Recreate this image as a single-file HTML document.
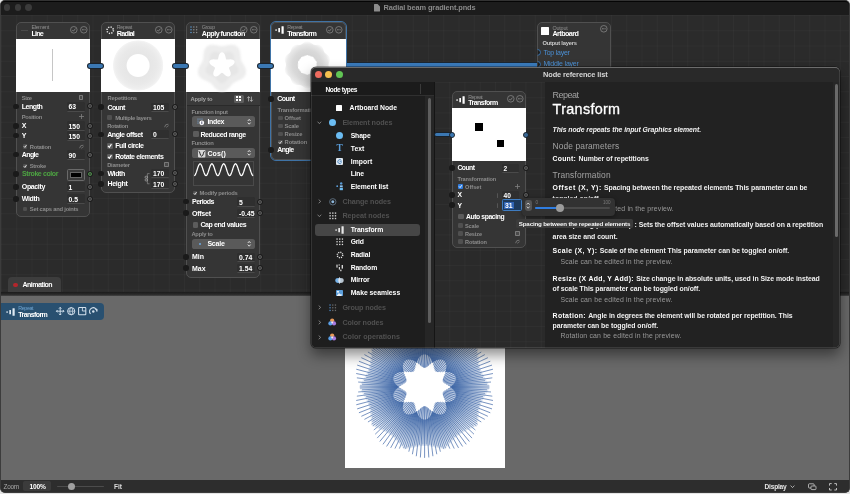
<!DOCTYPE html>
<html><head><meta charset="utf-8"><title>Radial beam gradient.pnds</title>
<style>
html,body{margin:0;padding:0;}
body{width:850px;height:494px;overflow:hidden;background:#000;position:relative;font-family:"Liberation Sans",sans-serif;}
.t{position:absolute;white-space:nowrap;}
.r{position:absolute;box-sizing:border-box;}
#root{position:absolute;left:0;top:0;width:850px;height:494px;overflow:hidden;will-change:transform;transform:translateZ(0);}
</style></head><body><div id="root">
<div class="r" style="left:0.00px;top:0.00px;width:850.00px;height:494.00px;background:#e4e4e4;"></div>
<div class="r" style="left:0.00px;top:0.00px;width:850.00px;height:492.80px;background:#2b2b2b;border-radius:5px;border:1px solid #3c3c3c;border-top:0.8px solid #333;"></div>
<div class="r" style="left:1.00px;top:0.80px;width:848.00px;height:13.90px;background:#1c1c1c;border-radius:4px 4px 0 0;border-top:1px solid #050505;"></div>
<div class="r" style="left:3.60px;top:4.00px;width:6.80px;height:6.80px;background:#3b3b3b;border-radius:50%;"></div>
<div class="r" style="left:14.50px;top:4.00px;width:6.80px;height:6.80px;background:#3b3b3b;border-radius:50%;"></div>
<div class="r" style="left:25.10px;top:4.00px;width:6.80px;height:6.80px;background:#3b3b3b;border-radius:50%;"></div>
<svg class="r" style="left:374.30px;top:3.60px;overflow:visible;" width="6" height="7.6" viewBox="0 0 6 7.6"><path d="M0.6 0h3l2.4 2.4v4.6a.6.6 0 0 1-.6.6h-4.8a.6.6 0 0 1-.6-.6v-6.4a.6.6 0 0 1 .6-.6z" fill="#8c8c8c"/></svg>
<div class="t" style="top:4px;font-size:7.4px;line-height:7.4px;color:#8a8a8a;left:383.60px;font-weight:700;letter-spacing:-0.102px;">Radial beam gradient.pnds</div>
<div class="r" style="left:1.00px;top:14.70px;width:848.00px;height:278.00px;background:#2b2b2b;background-image:linear-gradient(to right,rgba(255,255,255,.022) 0.6px,transparent 0.6px),linear-gradient(to bottom,rgba(255,255,255,.022) 0.6px,transparent 0.6px);background-size:15.25px 15.25px;"></div>
<div class="r" style="left:345.00px;top:63.00px;width:193.00px;height:4.00px;background:#3b7cbd;"></div>
<div class="r" style="left:345.00px;top:62.20px;width:193.00px;height:0.80px;background:#1b2733;"></div>
<div class="r" style="left:16.00px;top:22.00px;width:74.40px;height:194.50px;background:#353535;border-radius:5px;border:0.8px solid #505050;"></div>
<div class="r" style="left:16.00px;top:39.20px;width:74.40px;height:53.30px;background:#fff;"></div>
<div class="r" style="left:51.80px;top:48.60px;width:1.00px;height:32.60px;background:#c6c6c6;"></div>
<div class="t" style="top:25px;font-size:5.4px;line-height:5.4px;color:#8f8f8f;left:31.60px;letter-spacing:-0.364px;">Element</div>
<div class="t" style="top:30px;font-size:7.2px;line-height:7.2px;color:#fff;left:31.60px;font-weight:700;letter-spacing:-0.861px;">Line</div>
<div class="r" style="left:21.00px;top:30.30px;width:7.00px;height:0.80px;background:#4a4a4a;"></div>
<svg class="r" style="left:70.10px;top:25.50px;overflow:visible;" width="7.6" height="7.6" viewBox="0 0 7.6 7.6"><circle cx="3.8" cy="3.8" r="3.3" fill="none" stroke="#8e8e8e" stroke-width=".7"/><path d="M2.2 3.9l1.2 1.3 2.1-2.6" fill="none" stroke="#9a9a9a" stroke-width=".7"/></svg>
<svg class="r" style="left:79.50px;top:25.50px;overflow:visible;" width="7.6" height="7.6" viewBox="0 0 7.6 7.6"><circle cx="3.8" cy="3.8" r="3.3" fill="none" stroke="#8e8e8e" stroke-width=".7"/><path d="M2 3.8h3.6" fill="none" stroke="#9a9a9a" stroke-width=".9" stroke-dasharray="0.9 0.45"/></svg>
<div class="t" style="top:96px;font-size:5.8px;line-height:5.8px;color:#8c8c8c;left:21.80px;font-weight:700;letter-spacing:-0.468px;">Size</div>
<div class="r" style="left:78.80px;top:95.30px;width:4.40px;height:4.40px;background:#4a4a4a;border:0.6px solid #7a7a7a;border-radius:.8px;"></div>
<div class="t" style="top:103px;font-size:7.0px;line-height:7.0px;color:#fff;left:21.80px;font-weight:700;letter-spacing:-0.467px;">Length</div>
<div class="r" style="left:67.00px;top:102.00px;width:17.60px;height:9.60px;background:#2f2f2f;border-radius:1.5px;border-bottom:0.6px solid #4a4a4a;"></div>
<div class="t" style="top:104px;font-size:6.8px;line-height:6.8px;color:#fff;left:68.60px;font-weight:700;">63</div>
<div class="t" style="top:115px;font-size:5.8px;line-height:5.8px;color:#8c8c8c;left:21.80px;font-weight:700;letter-spacing:-0.355px;">Position</div>
<svg class="r" style="left:78.70px;top:114.10px;overflow:visible;" width="5" height="5" viewBox="0 0 5 5"><path d="M2.5 0v5M0 2.5h5" stroke="#808080" stroke-width=".8"/></svg>
<div class="t" style="top:122px;font-size:7.0px;line-height:7.0px;color:#fff;left:21.80px;font-weight:700;">X</div>
<div class="r" style="left:67.00px;top:121.20px;width:17.60px;height:9.40px;background:#2f2f2f;border-radius:1.5px;border-bottom:0.6px solid #4a4a4a;"></div>
<div class="t" style="top:124px;font-size:6.8px;line-height:6.8px;color:#fff;left:68.60px;font-weight:700;">150</div>
<div class="t" style="top:132px;font-size:7.0px;line-height:7.0px;color:#fff;left:21.80px;font-weight:700;">Y</div>
<div class="r" style="left:67.00px;top:131.20px;width:17.60px;height:9.40px;background:#2f2f2f;border-radius:1.5px;border-bottom:0.6px solid #4a4a4a;"></div>
<div class="t" style="top:134px;font-size:6.8px;line-height:6.8px;color:#fff;left:68.60px;font-weight:700;">150</div>
<div class="r" style="left:22.70px;top:144.45px;width:4.30px;height:4.30px;background:#505050;border-radius:1.2px;"></div>
<svg class="r" style="left:22.70px;top:144.45px;overflow:visible;" width="4.3" height="4.3" viewBox="0 0 4.6 4.6"><path d="M.9 2.4l1.1 1.3 1.8-2.7" fill="none" stroke="#e4e4e4" stroke-width=".95"/></svg>
<div class="t" style="top:145px;font-size:5.8px;line-height:5.8px;color:#8c8c8c;left:29.80px;font-weight:700;letter-spacing:-0.302px;">Rotation</div>
<svg class="r" style="left:78.70px;top:143.50px;overflow:visible;" width="5" height="5" viewBox="0 0 5 5"><path d="M.6 4.2A3.4 3.4 0 0 1 4.4 1.2" fill="none" stroke="#808080" stroke-width=".8"/><path d="M2.2 4.4L4.6 2.6" stroke="#808080" stroke-width=".7"/></svg>
<div class="t" style="top:151px;font-size:7.0px;line-height:7.0px;color:#fff;left:21.80px;font-weight:700;letter-spacing:-0.612px;">Angle</div>
<div class="r" style="left:67.00px;top:150.20px;width:17.60px;height:9.60px;background:#2f2f2f;border-radius:1.5px;border-bottom:0.6px solid #4a4a4a;"></div>
<div class="t" style="top:153px;font-size:6.8px;line-height:6.8px;color:#fff;left:68.60px;font-weight:700;">90</div>
<div class="r" style="left:22.70px;top:163.85px;width:4.30px;height:4.30px;background:#505050;border-radius:1.2px;"></div>
<svg class="r" style="left:22.70px;top:163.85px;overflow:visible;" width="4.3" height="4.3" viewBox="0 0 4.6 4.6"><path d="M.9 2.4l1.1 1.3 1.8-2.7" fill="none" stroke="#e4e4e4" stroke-width=".95"/></svg>
<div class="t" style="top:164px;font-size:5.8px;line-height:5.8px;color:#8c8c8c;left:29.80px;font-weight:700;letter-spacing:-0.330px;">Stroke</div>
<div class="t" style="top:170px;font-size:7.0px;line-height:7.0px;color:#4da342;left:22.00px;font-weight:700;letter-spacing:-0.406px;">Stroke color</div>
<div class="r" style="left:66.80px;top:169.20px;width:17.80px;height:11.60px;background:#3a3a3a;border:0.7px solid #6a6a6a;border-radius:1.5px;"></div>
<div class="r" style="left:69.80px;top:172.20px;width:12.00px;height:5.80px;background:#000;border:0.5px solid #666;"></div>
<div class="t" style="top:183px;font-size:7.0px;line-height:7.0px;color:#fff;left:21.80px;font-weight:700;letter-spacing:-0.364px;">Opacity</div>
<div class="r" style="left:67.00px;top:182.40px;width:17.60px;height:9.60px;background:#2f2f2f;border-radius:1.5px;border-bottom:0.6px solid #4a4a4a;"></div>
<div class="t" style="top:185px;font-size:6.8px;line-height:6.8px;color:#fff;left:68.60px;font-weight:700;">1</div>
<div class="t" style="top:195px;font-size:7.0px;line-height:7.0px;color:#fff;left:21.80px;font-weight:700;letter-spacing:-0.344px;">Width</div>
<div class="r" style="left:67.00px;top:194.20px;width:17.60px;height:9.60px;background:#2f2f2f;border-radius:1.5px;border-bottom:0.6px solid #4a4a4a;"></div>
<div class="t" style="top:197px;font-size:6.8px;line-height:6.8px;color:#fff;left:68.60px;font-weight:700;">0.5</div>
<div class="r" style="left:22.70px;top:206.80px;width:4.40px;height:4.40px;background:#505050;border-radius:1.2px;"></div>
<div class="t" style="top:207px;font-size:5.8px;line-height:5.8px;color:#8c8c8c;left:29.80px;font-weight:700;letter-spacing:-0.225px;">Set caps and joints</div>
<div class="r" style="left:13.40px;top:103.60px;width:5.60px;height:5.60px;background:#1a1a1a;border-radius:50%;"></div>
<div class="r" style="left:13.40px;top:123.00px;width:5.60px;height:5.60px;background:#1a1a1a;border-radius:50%;"></div>
<div class="r" style="left:13.40px;top:132.80px;width:5.60px;height:5.60px;background:#1a1a1a;border-radius:50%;"></div>
<div class="r" style="left:13.40px;top:151.80px;width:5.60px;height:5.60px;background:#1a1a1a;border-radius:50%;"></div>
<div class="r" style="left:13.40px;top:171.20px;width:5.60px;height:5.60px;background:#1a1a1a;border-radius:50%;"></div>
<div class="r" style="left:13.40px;top:184.20px;width:5.60px;height:5.60px;background:#1a1a1a;border-radius:50%;"></div>
<div class="r" style="left:13.40px;top:196.00px;width:5.60px;height:5.60px;background:#1a1a1a;border-radius:50%;"></div>
<div class="r" style="left:87.30px;top:103.40px;width:6.00px;height:6.00px;background:#3e3e3e;border-radius:50%;border:0.9px solid #181818;box-shadow:inset 0 0 0 .9px #646464;"></div>
<div class="r" style="left:87.30px;top:122.80px;width:6.00px;height:6.00px;background:#3e3e3e;border-radius:50%;border:0.9px solid #181818;box-shadow:inset 0 0 0 .9px #646464;"></div>
<div class="r" style="left:87.30px;top:132.60px;width:6.00px;height:6.00px;background:#3e3e3e;border-radius:50%;border:0.9px solid #181818;box-shadow:inset 0 0 0 .9px #646464;"></div>
<div class="r" style="left:87.30px;top:151.60px;width:6.00px;height:6.00px;background:#3e3e3e;border-radius:50%;border:0.9px solid #181818;box-shadow:inset 0 0 0 .9px #646464;"></div>
<div class="r" style="left:87.30px;top:184.00px;width:6.00px;height:6.00px;background:#3e3e3e;border-radius:50%;border:0.9px solid #181818;box-shadow:inset 0 0 0 .9px #646464;"></div>
<div class="r" style="left:87.30px;top:195.80px;width:6.00px;height:6.00px;background:#3e3e3e;border-radius:50%;border:0.9px solid #181818;box-shadow:inset 0 0 0 .9px #646464;"></div>
<div class="r" style="left:87.30px;top:171.00px;width:6.00px;height:6.00px;background:#3e3e3e;border-radius:50%;border:0.9px solid #181818;box-shadow:inset 0 0 0 .9px #4fa54a;"></div>
<div class="r" style="left:101.00px;top:22.00px;width:74.40px;height:171.00px;background:#353535;border-radius:5px;border:0.8px solid #505050;"></div>
<div class="r" style="left:101.00px;top:39.20px;width:74.40px;height:53.30px;background:#fff;"></div>
<svg class="r" style="left:101.00px;top:39.20px;overflow:visible;" width="74.4" height="53.3" viewBox="0 0 74.4 53.3"><defs><radialGradient id="rg2" gradientUnits="userSpaceOnUse" cx="37.1" cy="26.5" r="25.5"><stop offset=".43" stop-color="#fff"/><stop offset=".47" stop-color="#e6e6e6"/><stop offset=".72" stop-color="#e9e9e9"/><stop offset=".9" stop-color="#eeeeee"/><stop offset=".965" stop-color="#f3f3f3"/><stop offset="1" stop-color="#fff"/></radialGradient></defs><circle cx="37.1" cy="26.5" r="25.5" fill="url(#rg2)"/></svg>
<svg class="r" style="left:105.60px;top:26.40px;overflow:visible;" width="8.4" height="8.4" viewBox="0 0 8.4 8.4"><circle cx="4.2" cy="4.2" r="3.2" fill="none" stroke="#e8e8e8" stroke-width="1.5" stroke-dasharray="1.25 1.26"/></svg>
<div class="t" style="top:25px;font-size:5.4px;line-height:5.4px;color:#8f8f8f;left:116.80px;letter-spacing:-0.399px;">Repeat</div>
<div class="t" style="top:30px;font-size:7.2px;line-height:7.2px;color:#fff;left:116.80px;font-weight:700;letter-spacing:-0.716px;">Radial</div>
<svg class="r" style="left:155.20px;top:25.50px;overflow:visible;" width="7.6" height="7.6" viewBox="0 0 7.6 7.6"><circle cx="3.8" cy="3.8" r="3.3" fill="none" stroke="#8e8e8e" stroke-width=".7"/><path d="M2.2 3.9l1.2 1.3 2.1-2.6" fill="none" stroke="#9a9a9a" stroke-width=".7"/></svg>
<svg class="r" style="left:164.60px;top:25.50px;overflow:visible;" width="7.6" height="7.6" viewBox="0 0 7.6 7.6"><circle cx="3.8" cy="3.8" r="3.3" fill="none" stroke="#8e8e8e" stroke-width=".7"/><path d="M2 3.8h3.6" fill="none" stroke="#9a9a9a" stroke-width=".9" stroke-dasharray="0.9 0.45"/></svg>
<div class="t" style="top:96px;font-size:5.8px;line-height:5.8px;color:#8c8c8c;left:107.60px;font-weight:700;letter-spacing:-0.207px;">Repetitions</div>
<div class="t" style="top:104px;font-size:7.0px;line-height:7.0px;color:#fff;left:107.40px;font-weight:700;letter-spacing:-0.556px;">Count</div>
<div class="r" style="left:151.40px;top:102.60px;width:17.60px;height:9.60px;background:#2f2f2f;border-radius:1.5px;border-bottom:0.6px solid #4a4a4a;"></div>
<div class="t" style="top:105px;font-size:6.8px;line-height:6.8px;color:#fff;left:153.00px;font-weight:700;">105</div>
<div class="r" style="left:107.20px;top:115.40px;width:5.00px;height:5.00px;background:#505050;border-radius:1.2px;"></div>
<div class="t" style="top:115px;font-size:6.0px;line-height:6.0px;color:#8c8c8c;left:115.20px;font-weight:700;letter-spacing:-0.364px;">Multiple layers</div>
<div class="t" style="top:124px;font-size:5.8px;line-height:5.8px;color:#8c8c8c;left:107.20px;font-weight:700;letter-spacing:-0.359px;">Rotation</div>
<svg class="r" style="left:164.10px;top:122.70px;overflow:visible;" width="5" height="5" viewBox="0 0 5 5"><path d="M.6 4.2A3.4 3.4 0 0 1 4.4 1.2" fill="none" stroke="#808080" stroke-width=".8"/><path d="M2.2 4.4L4.6 2.6" stroke="#808080" stroke-width=".7"/></svg>
<div class="t" style="top:131px;font-size:7.0px;line-height:7.0px;color:#fff;left:107.20px;font-weight:700;letter-spacing:-0.405px;">Angle offset</div>
<div class="r" style="left:151.40px;top:129.80px;width:17.60px;height:9.60px;background:#2f2f2f;border-radius:1.5px;border-bottom:0.6px solid #4a4a4a;"></div>
<div class="t" style="top:132px;font-size:6.8px;line-height:6.8px;color:#fff;left:153.00px;font-weight:700;">0</div>
<div class="r" style="left:107.30px;top:143.30px;width:5.40px;height:5.40px;background:#5c5c5c;border-radius:1.2px;"></div>
<svg class="r" style="left:107.30px;top:143.30px;overflow:visible;" width="5.4" height="5.4" viewBox="0 0 4.6 4.6"><path d="M.9 2.4l1.1 1.3 1.8-2.7" fill="none" stroke="#fff" stroke-width=".95"/></svg>
<div class="t" style="top:142px;font-size:7.0px;line-height:7.0px;color:#fff;left:115.20px;font-weight:700;letter-spacing:-0.389px;">Full circle</div>
<div class="r" style="left:107.30px;top:153.50px;width:5.40px;height:5.40px;background:#5c5c5c;border-radius:1.2px;"></div>
<svg class="r" style="left:107.30px;top:153.50px;overflow:visible;" width="5.4" height="5.4" viewBox="0 0 4.6 4.6"><path d="M.9 2.4l1.1 1.3 1.8-2.7" fill="none" stroke="#fff" stroke-width=".95"/></svg>
<div class="t" style="top:153px;font-size:7.0px;line-height:7.0px;color:#fff;left:115.20px;font-weight:700;letter-spacing:-0.391px;">Rotate elements</div>
<div class="t" style="top:163px;font-size:5.8px;line-height:5.8px;color:#8c8c8c;left:107.20px;font-weight:700;letter-spacing:-0.288px;">Diameter</div>
<div class="r" style="left:164.40px;top:162.20px;width:4.40px;height:4.40px;background:#4a4a4a;border:0.6px solid #7a7a7a;border-radius:.8px;"></div>
<div class="t" style="top:170px;font-size:7.0px;line-height:7.0px;color:#fff;left:107.40px;font-weight:700;letter-spacing:-0.344px;">Width</div>
<div class="r" style="left:151.40px;top:169.00px;width:17.60px;height:9.40px;background:#2f2f2f;border-radius:1.5px;border-bottom:0.6px solid #4a4a4a;"></div>
<div class="t" style="top:171px;font-size:6.8px;line-height:6.8px;color:#fff;left:153.00px;font-weight:700;">170</div>
<div class="t" style="top:180px;font-size:7.0px;line-height:7.0px;color:#fff;left:107.40px;font-weight:700;letter-spacing:-0.256px;">Height</div>
<div class="r" style="left:151.40px;top:179.20px;width:17.60px;height:9.40px;background:#2f2f2f;border-radius:1.5px;border-bottom:0.6px solid #4a4a4a;"></div>
<div class="t" style="top:182px;font-size:6.8px;line-height:6.8px;color:#fff;left:153.00px;font-weight:700;">170</div>
<svg class="r" style="left:143.60px;top:172.00px;overflow:visible;" width="6.4" height="13.4" viewBox="0 0 6.4 13.4"><path d="M5.6 1.6H3.4v10.2h2.2" fill="none" stroke="#8a8a8a" stroke-width=".7"/><rect x="1" y="4.2" width="2.6" height="2" rx="1" fill="none" stroke="#bbb" stroke-width=".6"/><rect x="1" y="7" width="2.6" height="2" rx="1" fill="none" stroke="#bbb" stroke-width=".6"/></svg>
<div class="r" style="left:98.40px;top:104.40px;width:5.60px;height:5.60px;background:#1a1a1a;border-radius:50%;"></div>
<div class="r" style="left:172.30px;top:104.20px;width:6.00px;height:6.00px;background:#3e3e3e;border-radius:50%;border:0.9px solid #181818;box-shadow:inset 0 0 0 .9px #646464;"></div>
<div class="r" style="left:98.40px;top:131.60px;width:5.60px;height:5.60px;background:#1a1a1a;border-radius:50%;"></div>
<div class="r" style="left:172.30px;top:131.40px;width:6.00px;height:6.00px;background:#3e3e3e;border-radius:50%;border:0.9px solid #181818;box-shadow:inset 0 0 0 .9px #646464;"></div>
<div class="r" style="left:98.40px;top:170.60px;width:5.60px;height:5.60px;background:#1a1a1a;border-radius:50%;"></div>
<div class="r" style="left:172.30px;top:170.40px;width:6.00px;height:6.00px;background:#3e3e3e;border-radius:50%;border:0.9px solid #181818;box-shadow:inset 0 0 0 .9px #646464;"></div>
<div class="r" style="left:98.40px;top:181.00px;width:5.60px;height:5.60px;background:#1a1a1a;border-radius:50%;"></div>
<div class="r" style="left:172.30px;top:180.80px;width:6.00px;height:6.00px;background:#3e3e3e;border-radius:50%;border:0.9px solid #181818;box-shadow:inset 0 0 0 .9px #646464;"></div>
<div class="r" style="left:186.00px;top:22.00px;width:74.40px;height:256.40px;background:#353535;border-radius:5px;border:0.8px solid #505050;"></div>
<div class="r" style="left:186.00px;top:39.20px;width:74.40px;height:53.30px;background:#fff;"></div>
<svg class="r" style="left:186.00px;top:39.20px;overflow:visible;" width="74.4" height="53.3" viewBox="0 0 74.4 53.3"><g style="filter:blur(.9px)"><polygon points="36.00,7.20 37.60,7.08 39.27,6.75 41.06,6.32 42.98,5.91 45.00,5.67 47.03,5.75 48.97,6.24 50.69,7.17 52.12,8.53 53.18,10.22 53.88,12.13 54.28,14.12 54.49,16.07 54.62,17.91 54.83,19.60 55.21,21.16 55.82,22.64 56.65,24.13 57.61,25.70 58.60,27.40 59.45,29.25 60.00,31.20 60.13,33.19 59.78,35.13 58.93,36.90 57.65,38.43 56.05,39.69 54.28,40.68 52.49,41.48 50.78,42.18 49.24,42.90 47.87,43.74 46.65,44.78 45.49,46.02 44.30,47.43 42.98,48.89 41.49,50.27 39.80,51.40 37.95,52.14 36.00,52.40 34.05,52.14 32.20,51.40 30.51,50.27 29.02,48.89 27.70,47.43 26.51,46.02 25.35,44.78 24.13,43.74 22.76,42.90 21.22,42.18 19.51,41.48 17.72,40.68 15.95,39.69 14.35,38.43 13.07,36.90 12.22,35.13 11.87,33.19 12.00,31.20 12.55,29.25 13.40,27.40 14.39,25.70 15.35,24.13 16.18,22.64 16.79,21.16 17.17,19.60 17.38,17.91 17.51,16.07 17.72,14.12 18.12,12.13 18.82,10.22 19.88,8.53 21.31,7.17 23.03,6.24 24.97,5.75 27.00,5.67 29.02,5.91 30.94,6.32 32.73,6.75 34.40,7.08" fill="#ededed"/><polygon points="36.00,14.40 37.03,14.29 38.13,13.98 39.32,13.56 40.64,13.13 42.03,12.83 43.45,12.77 44.80,13.03 45.99,13.65 46.94,14.59 47.61,15.79 47.99,17.16 48.14,18.58 48.14,19.96 48.11,21.23 48.15,22.37 48.36,23.38 48.79,24.33 49.42,25.27 50.19,26.28 51.00,27.40 51.72,28.64 52.21,29.97 52.38,31.33 52.17,32.65 51.57,33.85 50.63,34.85 49.44,35.64 48.14,36.22 46.82,36.64 45.61,37.01 44.54,37.40 43.64,37.92 42.87,38.61 42.17,39.51 41.45,40.55 40.64,41.67 39.68,42.73 38.57,43.61 37.32,44.20 36.00,44.40 34.68,44.20 33.43,43.61 32.32,42.73 31.36,41.67 30.55,40.55 29.83,39.51 29.13,38.61 28.36,37.92 27.46,37.40 26.39,37.01 25.18,36.64 23.86,36.22 22.56,35.64 21.37,34.85 20.43,33.85 19.83,32.65 19.62,31.33 19.79,29.97 20.28,28.64 21.00,27.40 21.81,26.28 22.58,25.27 23.21,24.33 23.64,23.38 23.85,22.37 23.89,21.23 23.86,19.96 23.86,18.58 24.01,17.16 24.39,15.79 25.06,14.59 26.01,13.65 27.20,13.03 28.55,12.77 29.97,12.83 31.36,13.13 32.68,13.56 33.87,13.98 34.97,14.29" fill="#e6e6e6"/></g><polygon points="36.00,13.20 37.02,13.46 37.93,14.20 38.66,15.31 39.18,16.60 39.52,17.91 39.75,19.05 39.98,19.90 40.35,20.41 40.95,20.61 41.83,20.57 42.99,20.43 44.33,20.35 45.73,20.44 47.00,20.79 47.99,21.43 48.55,22.32 48.62,23.37 48.20,24.47 47.37,25.50 46.30,26.40 45.16,27.12 44.15,27.69 43.41,28.18 43.04,28.69 43.04,29.32 43.35,30.15 43.84,31.20 44.33,32.45 44.68,33.81 44.73,35.13 44.43,36.27 43.76,37.08 42.78,37.47 41.61,37.40 40.37,36.94 39.18,36.20 38.15,35.34 37.29,34.55 36.60,34.00 36.00,33.80 35.40,34.00 34.71,34.55 33.85,35.34 32.82,36.20 31.63,36.94 30.39,37.40 29.22,37.47 28.24,37.08 27.57,36.27 27.27,35.13 27.32,33.81 27.67,32.45 28.16,31.20 28.65,30.15 28.96,29.32 28.96,28.69 28.59,28.18 27.85,27.69 26.84,27.12 25.70,26.40 24.63,25.50 23.80,24.47 23.38,23.37 23.45,22.32 24.01,21.43 25.00,20.79 26.27,20.44 27.67,20.35 29.01,20.43 30.17,20.57 31.05,20.61 31.65,20.41 32.02,19.90 32.25,19.05 32.48,17.91 32.82,16.60 33.34,15.31 34.07,14.20 34.98,13.46" fill="#fff" style="filter:blur(.35px)"/></svg>
<svg class="r" style="left:190.40px;top:26.40px;overflow:visible;" width="8" height="8" viewBox="0 0 8 8"><circle cx="1" cy="1" r=".75" fill="#5b9bd6"/><circle cx="1" cy="3.8" r=".75" fill="#5b9bd6"/><circle cx="1" cy="6.6" r=".75" fill="#5b9bd6"/><circle cx="3.8" cy="1" r=".75" fill="#8a8a8a"/><circle cx="3.8" cy="3.8" r=".75" fill="#8a8a8a"/><circle cx="3.8" cy="6.6" r=".75" fill="#8a8a8a"/><circle cx="6.6" cy="1" r=".75" fill="#8a8a8a"/><circle cx="6.6" cy="3.8" r=".75" fill="#8a8a8a"/><circle cx="6.6" cy="6.6" r=".75" fill="#8a8a8a"/></svg>
<div class="t" style="top:25px;font-size:5.4px;line-height:5.4px;color:#8f8f8f;left:201.80px;letter-spacing:-0.399px;">Group</div>
<div class="t" style="top:30px;font-size:7.2px;line-height:7.2px;color:#fff;left:201.80px;font-weight:700;letter-spacing:-0.525px;">Apply function</div>
<svg class="r" style="left:240.40px;top:25.50px;overflow:visible;" width="7.6" height="7.6" viewBox="0 0 7.6 7.6"><circle cx="3.8" cy="3.8" r="3.3" fill="none" stroke="#8e8e8e" stroke-width=".7"/><path d="M2.2 3.9l1.2 1.3 2.1-2.6" fill="none" stroke="#9a9a9a" stroke-width=".7"/></svg>
<svg class="r" style="left:249.80px;top:25.50px;overflow:visible;" width="7.6" height="7.6" viewBox="0 0 7.6 7.6"><circle cx="3.8" cy="3.8" r="3.3" fill="none" stroke="#8e8e8e" stroke-width=".7"/><path d="M2 3.8h3.6" fill="none" stroke="#9a9a9a" stroke-width=".9" stroke-dasharray="0.9 0.45"/></svg>
<div class="r" style="left:186.80px;top:92.50px;width:72.80px;height:13.00px;background:#3a3a3a;border-bottom:0.7px solid #2a2a2a;"></div>
<div class="t" style="top:97px;font-size:5.8px;line-height:5.8px;color:#a5a5a5;left:190.60px;font-weight:700;letter-spacing:-0.170px;">Apply to</div>
<div class="r" style="left:233.60px;top:94.60px;width:10.60px;height:8.40px;background:#5e5e5e;border-radius:1.6px;"></div>
<svg class="r" style="left:236.40px;top:96.30px;overflow:visible;" width="5" height="5" viewBox="0 0 5 5"><rect x="0" y="0" width="2" height="2" fill="#fff"/><rect x="3" y="0" width="2" height="2" fill="#fff"/><rect x="0" y="3" width="2" height="2" fill="#fff"/><rect x="3" y="3" width="2" height="2" fill="#fff"/></svg>
<svg class="r" style="left:247.40px;top:96.00px;overflow:visible;" width="6" height="6" viewBox="0 0 6 6"><path d="M1.6 5.4V.8M.2 2.2L1.6.6 3 2.2M4.4.6v4.6M3 3.8l1.4 1.6 1.4-1.6" fill="none" stroke="#d0d0d0" stroke-width=".7"/></svg>
<div class="t" style="top:110px;font-size:5.8px;line-height:5.8px;color:#8c8c8c;left:191.40px;font-weight:700;letter-spacing:-0.289px;">Function input</div>
<div class="r" style="left:192.40px;top:116.20px;width:62.40px;height:10.40px;background:#5a5a5a;border-radius:2.6px;"></div>
<div class="t" style="top:118px;font-size:7.0px;line-height:7.0px;color:#fff;left:207.40px;font-weight:700;letter-spacing:-0.324px;">Index</div>
<svg class="r" style="left:247.40px;top:117.60px;overflow:visible;" width="4.4" height="7.6" viewBox="0 0 4.4 7.6"><path d="M.8 3L2.2 1.4 3.6 3M.8 4.6 L2.2 6.2 3.6 4.6" fill="none" stroke="#fff" stroke-width=".8"/></svg>
<svg class="r" style="left:197.40px;top:117.60px;overflow:visible;" width="7.6" height="7.6" viewBox="0 0 7.6 7.6"><g fill="#7fb2e5"><circle cx="1" cy="1" r=".6"/><circle cx="3" cy="1" r=".6"/><circle cx="5" cy="1" r=".6"/><circle cx="1" cy="3" r=".6"/><circle cx="1" cy="5" r=".6"/></g><circle cx="4.8" cy="4.8" r="2.4" fill="#fff"/><rect x="4.45" y="3.4" width=".8" height="2.8" fill="#335"/></svg>
<div class="r" style="left:192.80px;top:131.30px;width:5.80px;height:5.80px;background:#5c5c5c;border-radius:1.2px;"></div>
<div class="t" style="top:131px;font-size:7.0px;line-height:7.0px;color:#fff;left:200.40px;font-weight:700;letter-spacing:-0.398px;">Reduced range</div>
<div class="t" style="top:141px;font-size:5.8px;line-height:5.8px;color:#8c8c8c;left:191.40px;font-weight:700;letter-spacing:-0.284px;">Function</div>
<div class="r" style="left:192.40px;top:148.00px;width:62.40px;height:10.40px;background:#5a5a5a;border-radius:2.6px;"></div>
<div class="t" style="top:150px;font-size:7.0px;line-height:7.0px;color:#fff;left:207.40px;font-weight:700;letter-spacing:0.150px;">Cos()</div>
<svg class="r" style="left:247.40px;top:149.40px;overflow:visible;" width="4.4" height="7.6" viewBox="0 0 4.4 7.6"><path d="M.8 3L2.2 1.4 3.6 3M.8 4.6 L2.2 6.2 3.6 4.6" fill="none" stroke="#fff" stroke-width=".8"/></svg>
<svg class="r" style="left:197.60px;top:149.60px;overflow:visible;" width="7.4" height="7.4" viewBox="0 0 7.4 7.4"><rect x="0" y="0" width="7.4" height="7.4" fill="#d8d8d8" rx=".8"/><path d="M.8 1.2C2 1.2 2 6.2 3.7 6.2S5.4 1.2 6.6 1.2" fill="none" stroke="#222" stroke-width="1"/></svg>
<div class="r" style="left:193.40px;top:160.60px;width:60.60px;height:25.80px;background:transparent;border:0.6px solid #4a4a4a;"></div>
<svg class="r" style="left:193.00px;top:160.00px;overflow:visible;" width="62" height="27" viewBox="0 0 62 27"><polyline points="1.20,15.60 1.69,15.40 2.18,14.81 2.67,13.87 3.17,12.65 3.66,11.23 4.15,9.70 4.64,8.17 5.13,6.75 5.62,5.53 6.12,4.59 6.61,4.00 7.10,3.80 7.59,4.00 8.08,4.59 8.57,5.53 9.07,6.75 9.56,8.17 10.05,9.70 10.54,11.23 11.03,12.65 11.52,13.87 12.02,14.81 12.51,15.40 13.00,15.60 13.49,15.40 13.98,14.81 14.47,13.87 14.97,12.65 15.46,11.23 15.95,9.70 16.44,8.17 16.93,6.75 17.42,5.53 17.92,4.59 18.41,4.00 18.90,3.80 19.39,4.00 19.88,4.59 20.38,5.53 20.87,6.75 21.36,8.17 21.85,9.70 22.34,11.23 22.83,12.65 23.32,13.87 23.82,14.81 24.31,15.40 24.80,15.60 25.29,15.40 25.78,14.81 26.27,13.87 26.77,12.65 27.26,11.23 27.75,9.70 28.24,8.17 28.73,6.75 29.22,5.53 29.72,4.59 30.21,4.00 30.70,3.80 31.19,4.00 31.68,4.59 32.17,5.53 32.67,6.75 33.16,8.17 33.65,9.70 34.14,11.23 34.63,12.65 35.12,13.87 35.62,14.81 36.11,15.40 36.60,15.60 37.09,15.40 37.58,14.81 38.07,13.87 38.57,12.65 39.06,11.23 39.55,9.70 40.04,8.17 40.53,6.75 41.02,5.53 41.52,4.59 42.01,4.00 42.50,3.80 42.99,4.00 43.48,4.59 43.97,5.53 44.47,6.75 44.96,8.17 45.45,9.70 45.94,11.23 46.43,12.65 46.92,13.87 47.42,14.81 47.91,15.40 48.40,15.60 48.89,15.40 49.38,14.81 49.88,13.87 50.37,12.65 50.86,11.23 51.35,9.70 51.84,8.17 52.33,6.75 52.82,5.53 53.32,4.59 53.81,4.00 54.30,3.80 54.79,4.00 55.28,4.59 55.77,5.53 56.27,6.75 56.76,8.17 57.25,9.70 57.74,11.23 58.23,12.65 58.72,13.87 59.22,14.81 59.71,15.40 60.20,15.60" fill="none" stroke="#fff" stroke-width="1.25"/></svg>
<div class="r" style="left:192.70px;top:190.60px;width:4.40px;height:4.40px;background:#505050;border-radius:1.2px;"></div>
<svg class="r" style="left:192.70px;top:190.60px;overflow:visible;" width="4.4" height="4.4" viewBox="0 0 4.6 4.6"><path d="M.9 2.4l1.1 1.3 1.8-2.7" fill="none" stroke="#e4e4e4" stroke-width=".95"/></svg>
<div class="t" style="top:191px;font-size:5.8px;line-height:5.8px;color:#8c8c8c;left:199.60px;font-weight:700;letter-spacing:-0.234px;">Modify periods</div>
<div class="t" style="top:198px;font-size:7.0px;line-height:7.0px;color:#fff;left:192.00px;font-weight:700;letter-spacing:-0.531px;">Periods</div>
<div class="r" style="left:237.40px;top:197.20px;width:17.40px;height:9.40px;background:#2f2f2f;border-radius:1.5px;border-bottom:0.6px solid #4a4a4a;"></div>
<div class="t" style="top:200px;font-size:6.8px;line-height:6.8px;color:#fff;left:239.00px;font-weight:700;">5</div>
<div class="t" style="top:210px;font-size:7.0px;line-height:7.0px;color:#fff;left:192.00px;font-weight:700;letter-spacing:-0.246px;">Offset</div>
<div class="r" style="left:237.40px;top:208.80px;width:17.40px;height:9.40px;background:#2f2f2f;border-radius:1.5px;border-bottom:0.6px solid #4a4a4a;"></div>
<div class="t" style="top:211px;font-size:6.8px;line-height:6.8px;color:#fff;left:239.00px;font-weight:700;">-0.45</div>
<div class="r" style="left:192.60px;top:222.10px;width:5.80px;height:5.80px;background:#5c5c5c;border-radius:1.2px;"></div>
<div class="t" style="top:221px;font-size:7.0px;line-height:7.0px;color:#fff;left:200.40px;font-weight:700;letter-spacing:-0.397px;">Cap end values</div>
<div class="t" style="top:232px;font-size:5.8px;line-height:5.8px;color:#8c8c8c;left:191.40px;font-weight:700;letter-spacing:-0.241px;">Apply to</div>
<div class="r" style="left:192.40px;top:238.60px;width:62.40px;height:10.40px;background:#5a5a5a;border-radius:2.6px;"></div>
<div class="t" style="top:240px;font-size:7.0px;line-height:7.0px;color:#fff;left:207.40px;font-weight:700;letter-spacing:-0.201px;">Scale</div>
<svg class="r" style="left:247.40px;top:240.00px;overflow:visible;" width="4.4" height="7.6" viewBox="0 0 4.4 7.6"><path d="M.8 3L2.2 1.4 3.6 3M.8 4.6 L2.2 6.2 3.6 4.6" fill="none" stroke="#fff" stroke-width=".8"/></svg>
<div class="r" style="left:199.20px;top:242.80px;width:2.00px;height:2.00px;background:#6da8e0;border-radius:50%;"></div>
<div class="t" style="top:253px;font-size:7.0px;line-height:7.0px;color:#fff;left:192.00px;font-weight:700;">Min</div>
<div class="r" style="left:237.40px;top:252.60px;width:17.40px;height:9.40px;background:#2f2f2f;border-radius:1.5px;border-bottom:0.6px solid #4a4a4a;"></div>
<div class="t" style="top:255px;font-size:6.8px;line-height:6.8px;color:#fff;left:239.00px;font-weight:700;">0.74</div>
<div class="t" style="top:265px;font-size:7.0px;line-height:7.0px;color:#fff;left:192.00px;font-weight:700;">Max</div>
<div class="r" style="left:237.40px;top:263.80px;width:17.40px;height:9.40px;background:#2f2f2f;border-radius:1.5px;border-bottom:0.6px solid #4a4a4a;"></div>
<div class="t" style="top:266px;font-size:6.8px;line-height:6.8px;color:#fff;left:239.00px;font-weight:700;">1.54</div>
<div class="r" style="left:183.40px;top:198.80px;width:5.60px;height:5.60px;background:#1a1a1a;border-radius:50%;"></div>
<div class="r" style="left:257.30px;top:198.60px;width:6.00px;height:6.00px;background:#3e3e3e;border-radius:50%;border:0.9px solid #181818;box-shadow:inset 0 0 0 .9px #646464;"></div>
<div class="r" style="left:183.40px;top:210.40px;width:5.60px;height:5.60px;background:#1a1a1a;border-radius:50%;"></div>
<div class="r" style="left:257.30px;top:210.20px;width:6.00px;height:6.00px;background:#3e3e3e;border-radius:50%;border:0.9px solid #181818;box-shadow:inset 0 0 0 .9px #646464;"></div>
<div class="r" style="left:183.40px;top:254.20px;width:5.60px;height:5.60px;background:#1a1a1a;border-radius:50%;"></div>
<div class="r" style="left:257.30px;top:254.00px;width:6.00px;height:6.00px;background:#3e3e3e;border-radius:50%;border:0.9px solid #181818;box-shadow:inset 0 0 0 .9px #646464;"></div>
<div class="r" style="left:183.40px;top:265.40px;width:5.60px;height:5.60px;background:#1a1a1a;border-radius:50%;"></div>
<div class="r" style="left:257.30px;top:265.20px;width:6.00px;height:6.00px;background:#3e3e3e;border-radius:50%;border:0.9px solid #181818;box-shadow:inset 0 0 0 .9px #646464;"></div>
<div class="r" style="left:269.80px;top:20.80px;width:77.00px;height:140.40px;background:#2f3c4a;border-radius:6px;border:1.6px solid #3f73a6;"></div>
<div class="r" style="left:271.00px;top:22.00px;width:74.60px;height:138.00px;background:#353535;border-radius:5px;border:0.8px solid #505050;"></div>
<div class="r" style="left:271.00px;top:39.20px;width:74.60px;height:53.30px;background:#fff;"></div>
<svg class="r" style="left:271.00px;top:39.20px;overflow:visible;" width="74.6" height="53.3" viewBox="0 0 74.6 53.3"><defs><radialGradient id="rg4" gradientUnits="userSpaceOnUse" cx="36.3" cy="25.9" r="24"><stop offset=".36" stop-color="#fff"/><stop offset=".42" stop-color="#d4d4d4"/><stop offset=".62" stop-color="#d9d9d9"/><stop offset=".85" stop-color="#e8e8e8"/><stop offset="1" stop-color="#fff"/></radialGradient></defs><polygon points="36.30,2.20 38.13,2.62 39.82,3.68 41.35,4.85 42.88,5.64 44.59,5.90 46.51,5.85 48.50,5.99 50.23,6.73 51.46,8.15 52.21,9.99 52.76,11.84 53.53,13.38 54.76,14.59 56.35,15.69 57.87,16.96 58.84,18.58 59.00,20.45 58.52,22.38 57.88,24.20 57.60,25.90 57.88,27.60 58.52,29.42 59.00,31.35 58.84,33.22 57.87,34.84 56.35,36.11 54.76,37.21 53.53,38.42 52.76,39.96 52.21,41.81 51.46,43.65 50.23,45.07 48.50,45.81 46.51,45.95 44.59,45.90 42.88,46.16 41.35,46.95 39.82,48.12 38.13,49.18 36.30,49.60 34.47,49.18 32.78,48.12 31.25,46.95 29.72,46.16 28.01,45.90 26.09,45.95 24.10,45.81 22.37,45.07 21.14,43.65 20.39,41.81 19.84,39.96 19.07,38.42 17.84,37.21 16.25,36.11 14.73,34.84 13.76,33.22 13.60,31.35 14.08,29.42 14.72,27.60 15.00,25.90 14.72,24.20 14.08,22.38 13.60,20.45 13.76,18.58 14.73,16.96 16.25,15.69 17.84,14.59 19.07,13.38 19.84,11.84 20.39,9.99 21.14,8.15 22.37,6.73 24.10,5.99 26.09,5.85 28.01,5.90 29.72,5.64 31.25,4.85 32.78,3.68 34.47,2.62" fill="url(#rg4)" style="filter:blur(.6px)"/><polygon points="36.30,16.00 37.05,16.41 37.65,17.41 38.09,18.43 38.56,18.96 39.24,18.80 40.20,18.24 41.27,17.78 42.12,17.89 42.48,18.66 42.38,19.82 42.14,20.91 42.21,21.61 42.85,21.89 43.96,22.00 45.09,22.26 45.72,22.84 45.56,23.68 44.79,24.55 43.96,25.30 43.60,25.90 43.96,26.50 44.79,27.25 45.56,28.12 45.72,28.96 45.09,29.54 43.96,29.80 42.85,29.91 42.21,30.19 42.14,30.89 42.38,31.98 42.48,33.14 42.12,33.91 41.27,34.02 40.20,33.56 39.24,33.00 38.56,32.84 38.09,33.37 37.65,34.39 37.05,35.39 36.30,35.80 35.55,35.39 34.95,34.39 34.51,33.37 34.04,32.84 33.36,33.00 32.40,33.56 31.33,34.02 30.48,33.91 30.12,33.14 30.22,31.98 30.46,30.89 30.39,30.19 29.75,29.91 28.64,29.80 27.51,29.54 26.88,28.96 27.04,28.12 27.81,27.25 28.64,26.50 29.00,25.90 28.64,25.30 27.81,24.55 27.04,23.68 26.88,22.84 27.51,22.26 28.64,22.00 29.75,21.89 30.39,21.61 30.46,20.91 30.22,19.82 30.12,18.66 30.48,17.89 31.33,17.78 32.40,18.24 33.36,18.80 34.04,18.96 34.51,18.43 34.95,17.41 35.55,16.41" fill="#fff" style="filter:blur(.4px)"/></svg>
<svg class="r" style="left:275.20px;top:26.20px;overflow:visible;" width="9.6" height="8" viewBox="0 0 9.6 8"><circle cx="1.1" cy="4" r=".85" fill="#fff"/><rect x="3.3" y="1.9" width="1.7" height="4.3" rx=".3" fill="#fff"/><rect x="6.5" y=".2" width="2.2" height="7.6" rx=".3" fill="#fff"/></svg>
<div class="t" style="top:25px;font-size:5.4px;line-height:5.4px;color:#8f8f8f;left:287.20px;letter-spacing:-0.399px;">Repeat</div>
<div class="t" style="top:30px;font-size:7.2px;line-height:7.2px;color:#fff;left:287.20px;font-weight:700;letter-spacing:-0.695px;">Transform</div>
<svg class="r" style="left:325.60px;top:25.50px;overflow:visible;" width="7.6" height="7.6" viewBox="0 0 7.6 7.6"><circle cx="3.8" cy="3.8" r="3.3" fill="none" stroke="#8e8e8e" stroke-width=".7"/><path d="M2.2 3.9l1.2 1.3 2.1-2.6" fill="none" stroke="#9a9a9a" stroke-width=".7"/></svg>
<svg class="r" style="left:335.00px;top:25.50px;overflow:visible;" width="7.6" height="7.6" viewBox="0 0 7.6 7.6"><circle cx="3.8" cy="3.8" r="3.3" fill="none" stroke="#8e8e8e" stroke-width=".7"/><path d="M2 3.8h3.6" fill="none" stroke="#9a9a9a" stroke-width=".9" stroke-dasharray="0.9 0.45"/></svg>
<div class="t" style="top:95px;font-size:7.0px;line-height:7.0px;color:#fff;left:277.20px;font-weight:700;letter-spacing:-0.556px;">Count</div>
<div class="t" style="top:108px;font-size:5.8px;line-height:5.8px;color:#8c8c8c;left:277.60px;font-weight:700;letter-spacing:-0.170px;">Transformation</div>
<div class="r" style="left:278.40px;top:115.75px;width:4.50px;height:4.50px;background:#505050;border-radius:1.2px;"></div>
<div class="t" style="top:116px;font-size:5.8px;line-height:5.8px;color:#8c8c8c;left:284.60px;font-weight:700;letter-spacing:-0.070px;">Offset</div>
<div class="r" style="left:278.40px;top:123.75px;width:4.50px;height:4.50px;background:#505050;border-radius:1.2px;"></div>
<div class="t" style="top:124px;font-size:5.8px;line-height:5.8px;color:#8c8c8c;left:284.60px;font-weight:700;letter-spacing:-0.189px;">Scale</div>
<div class="r" style="left:278.40px;top:131.75px;width:4.50px;height:4.50px;background:#505050;border-radius:1.2px;"></div>
<div class="t" style="top:132px;font-size:5.8px;line-height:5.8px;color:#8c8c8c;left:284.60px;font-weight:700;letter-spacing:-0.116px;">Resize</div>
<div class="r" style="left:278.40px;top:139.75px;width:4.50px;height:4.50px;background:#505050;border-radius:1.2px;"></div>
<svg class="r" style="left:278.40px;top:139.75px;overflow:visible;" width="4.5" height="4.5" viewBox="0 0 4.6 4.6"><path d="M.9 2.4l1.1 1.3 1.8-2.7" fill="none" stroke="#e4e4e4" stroke-width=".95"/></svg>
<div class="t" style="top:140px;font-size:5.8px;line-height:5.8px;color:#8c8c8c;left:284.60px;font-weight:700;letter-spacing:-0.131px;">Rotation</div>
<div class="t" style="top:146px;font-size:7.0px;line-height:7.0px;color:#fff;left:277.20px;font-weight:700;letter-spacing:-0.612px;">Angle</div>
<div class="r" style="left:268.40px;top:96.20px;width:5.60px;height:5.60px;background:#1a1a1a;border-radius:50%;"></div>
<div class="r" style="left:268.40px;top:147.00px;width:5.60px;height:5.60px;background:#1a1a1a;border-radius:50%;"></div>
<div class="r" style="left:87.00px;top:63.20px;width:17.20px;height:5.60px;background:#18222c;border-radius:3px;"></div>
<div class="r" style="left:87.90px;top:64.20px;width:15.40px;height:3.60px;background:#3b78b3;border-radius:2px;"></div>
<div class="r" style="left:172.10px;top:63.20px;width:16.80px;height:5.60px;background:#18222c;border-radius:3px;"></div>
<div class="r" style="left:173.00px;top:64.20px;width:15.00px;height:3.60px;background:#3b78b3;border-radius:2px;"></div>
<div class="r" style="left:257.30px;top:63.20px;width:16.80px;height:5.60px;background:#18222c;border-radius:3px;"></div>
<div class="r" style="left:258.20px;top:64.20px;width:15.00px;height:3.60px;background:#3b78b3;border-radius:2px;"></div>
<div class="r" style="left:537.00px;top:22.20px;width:73.60px;height:60.00px;background:#353535;border-radius:5px;border:0.8px solid #505050;"></div>
<div class="r" style="left:541.40px;top:27.00px;width:7.80px;height:7.80px;background:#fff;border-radius:.6px;"></div>
<div class="t" style="top:26px;font-size:5.4px;line-height:5.4px;color:#8f8f8f;left:552.40px;letter-spacing:-0.159px;">Output</div>
<div class="t" style="top:30px;font-size:7.2px;line-height:7.2px;color:#fff;left:552.40px;font-weight:700;letter-spacing:-0.537px;">Artboard</div>
<svg class="r" style="left:600.20px;top:25.00px;overflow:visible;" width="7.6" height="7.6" viewBox="0 0 7.6 7.6"><circle cx="3.8" cy="3.8" r="3.3" fill="none" stroke="#8e8e8e" stroke-width=".7"/><path d="M2 3.8h3.6" fill="none" stroke="#9a9a9a" stroke-width=".9" stroke-dasharray="0.9 0.45"/></svg>
<div class="t" style="top:41px;font-size:5.8px;line-height:5.8px;color:#cacaca;left:542.40px;font-weight:700;letter-spacing:-0.239px;">Output layers</div>
<div class="t" style="top:49px;font-size:7.0px;line-height:7.0px;color:#4b8fd3;left:543.40px;letter-spacing:-0.239px;">Top layer</div>
<div class="t" style="top:60px;font-size:7.0px;line-height:7.0px;color:#4b8fd3;left:543.40px;letter-spacing:-0.204px;">Middle layer</div>
<svg class="r" style="left:536.60px;top:48.80px;overflow:visible;" width="4.4" height="6.8" viewBox="0 0 4.4 6.8"><path d="M.6 .5A2.9 2.9 0 0 1 .6 6.3z" fill="#1f1f1f"/><path d="M.6 .5A2.9 2.9 0 0 1 .6 6.3" fill="none" stroke="#3b7cbd" stroke-width=".9"/></svg>
<svg class="r" style="left:536.60px;top:60.50px;overflow:visible;" width="4.4" height="6.8" viewBox="0 0 4.4 6.8"><path d="M.6 .5A2.9 2.9 0 0 1 .6 6.3z" fill="#1f1f1f"/><path d="M.6 .5A2.9 2.9 0 0 1 .6 6.3" fill="none" stroke="#3b7cbd" stroke-width=".9"/></svg>
<div class="r" style="left:8.20px;top:277.40px;width:52.60px;height:14.60px;background:#3d3d3d;border-radius:4px 4px 0 0;"></div>
<div class="r" style="left:13.40px;top:282.80px;width:4.60px;height:4.60px;background:#b3262c;border-radius:50%;"></div>
<div class="t" style="top:281px;font-size:7.0px;line-height:7.0px;color:#fff;left:22.60px;font-weight:700;letter-spacing:-0.528px;">Animation</div>
<div class="r" style="left:1.00px;top:291.80px;width:848.00px;height:4.60px;background:linear-gradient(#1b1b1b,#2a2a2a 60%,#454545);"></div>
<div class="r" style="left:1.00px;top:296.20px;width:848.00px;height:183.60px;background:#696969;"></div>
<div class="r" style="left:345.00px;top:308.00px;width:160.40px;height:160.00px;background:#fff;"></div>
<svg class="r" style="left:345.00px;top:308.00px;overflow:visible;" width="160.4" height="160" viewBox="0 0 160.4 160"><defs><radialGradient id="pg" gradientUnits="userSpaceOnUse" cx="79.6" cy="79" r="66"><stop offset=".38" stop-color="#1f4c92" stop-opacity=".72"/><stop offset=".5" stop-color="#2a589c" stop-opacity=".55"/><stop offset=".7" stop-color="#3a66a6" stop-opacity=".36"/><stop offset=".88" stop-color="#4a74b0" stop-opacity=".2"/><stop offset="1" stop-color="#4a74b0" stop-opacity=".1"/></radialGradient></defs><path d="M79.60,20.07 L80.63,20.05 L81.66,20.00 L82.70,19.92 L83.74,19.81 L84.79,19.67 L85.85,19.50 L86.93,19.30 L88.02,19.08 L89.13,18.85 L90.25,18.60 L91.39,18.34 L92.55,18.07 L93.73,17.80 L94.93,17.53 L96.14,17.27 L97.37,17.01 L98.62,16.78 L99.89,16.56 L100.78,17.48 L101.66,18.40 L102.50,19.33 L103.33,20.26 L104.14,21.18 L104.94,22.09 L105.72,22.99 L106.49,23.87 L107.25,24.74 L108.00,25.58 L108.76,26.39 L109.52,27.18 L110.28,27.95 L111.04,28.68 L111.82,29.38 L112.61,30.06 L113.42,30.70 L114.24,31.32 L115.08,31.91 L115.95,32.48 L116.83,33.02 L117.74,33.55 L118.68,34.05 L119.64,34.54 L120.62,35.01 L121.63,35.48 L122.66,35.94 L123.72,36.39 L124.80,36.85 L125.89,37.32 L127.00,37.79 L128.13,38.28 L129.27,38.78 L130.41,39.30 L131.56,39.84 L132.71,40.41 L132.90,41.68 L133.06,42.94 L133.20,44.19 L133.33,45.43 L133.44,46.65 L133.55,47.85 L133.65,49.04 L133.75,50.21 L133.86,51.35 L133.98,52.48 L134.11,53.58 L134.26,54.66 L134.43,55.73 L134.62,56.77 L134.83,57.80 L135.07,58.81 L135.35,59.81 L135.65,60.79 L135.98,61.76 L136.35,62.73 L136.75,63.69 L137.17,64.65 L137.64,65.60 L138.12,66.56 L138.64,67.52 L139.18,68.49 L139.75,69.47 L140.34,70.46 L140.94,71.47 L141.55,72.49 L142.17,73.53 L142.80,74.58 L143.43,75.66 L144.05,76.75 L144.66,77.86 L145.25,79.00 L144.66,80.14 L144.05,81.25 L143.43,82.34 L142.80,83.42 L142.17,84.47 L141.55,85.51 L140.94,86.53 L140.34,87.54 L139.75,88.53 L139.18,89.51 L138.64,90.48 L138.12,91.44 L137.64,92.40 L137.17,93.35 L136.75,94.31 L136.35,95.27 L135.98,96.24 L135.65,97.21 L135.35,98.19 L135.07,99.19 L134.83,100.20 L134.62,101.23 L134.43,102.27 L134.26,103.34 L134.11,104.42 L133.98,105.52 L133.86,106.65 L133.75,107.79 L133.65,108.96 L133.55,110.15 L133.44,111.35 L133.33,112.57 L133.20,113.81 L133.06,115.06 L132.90,116.32 L132.71,117.59 L131.56,118.16 L130.41,118.70 L129.27,119.22 L128.13,119.72 L127.00,120.21 L125.89,120.68 L124.80,121.15 L123.72,121.61 L122.66,122.06 L121.63,122.52 L120.62,122.99 L119.64,123.46 L118.68,123.95 L117.74,124.45 L116.83,124.98 L115.95,125.52 L115.08,126.09 L114.24,126.68 L113.42,127.30 L112.61,127.94 L111.82,128.62 L111.04,129.32 L110.28,130.05 L109.52,130.82 L108.76,131.61 L108.00,132.42 L107.25,133.26 L106.49,134.13 L105.72,135.01 L104.94,135.91 L104.14,136.82 L103.33,137.74 L102.50,138.67 L101.66,139.60 L100.78,140.52 L99.89,141.44 L98.62,141.22 L97.37,140.99 L96.14,140.73 L94.93,140.47 L93.73,140.20 L92.55,139.93 L91.39,139.66 L90.25,139.40 L89.13,139.15 L88.02,138.92 L86.93,138.70 L85.85,138.50 L84.79,138.33 L83.74,138.19 L82.70,138.08 L81.66,138.00 L80.63,137.95 L79.60,137.93 L78.57,137.95 L77.54,138.00 L76.50,138.08 L75.46,138.19 L74.41,138.33 L73.35,138.50 L72.27,138.70 L71.18,138.92 L70.07,139.15 L68.95,139.40 L67.81,139.66 L66.65,139.93 L65.47,140.20 L64.27,140.47 L63.06,140.73 L61.83,140.99 L60.58,141.22 L59.31,141.44 L58.42,140.52 L57.54,139.60 L56.70,138.67 L55.87,137.74 L55.06,136.82 L54.26,135.91 L53.48,135.01 L52.71,134.13 L51.95,133.26 L51.20,132.42 L50.44,131.61 L49.68,130.82 L48.92,130.05 L48.16,129.32 L47.38,128.62 L46.59,127.94 L45.78,127.30 L44.96,126.68 L44.12,126.09 L43.25,125.52 L42.37,124.98 L41.46,124.45 L40.52,123.95 L39.56,123.46 L38.58,122.99 L37.57,122.52 L36.54,122.06 L35.48,121.61 L34.40,121.15 L33.31,120.68 L32.20,120.21 L31.07,119.72 L29.93,119.22 L28.79,118.70 L27.64,118.16 L26.49,117.59 L26.30,116.32 L26.14,115.06 L26.00,113.81 L25.87,112.57 L25.76,111.35 L25.65,110.15 L25.55,108.96 L25.45,107.79 L25.34,106.65 L25.22,105.52 L25.09,104.42 L24.94,103.34 L24.77,102.27 L24.58,101.23 L24.37,100.20 L24.13,99.19 L23.85,98.19 L23.55,97.21 L23.22,96.24 L22.85,95.27 L22.45,94.31 L22.03,93.35 L21.56,92.40 L21.08,91.44 L20.56,90.48 L20.02,89.51 L19.45,88.53 L18.86,87.54 L18.26,86.53 L17.65,85.51 L17.03,84.47 L16.40,83.42 L15.77,82.34 L15.15,81.25 L14.54,80.14 L13.95,79.00 L14.54,77.86 L15.15,76.75 L15.77,75.66 L16.40,74.58 L17.03,73.53 L17.65,72.49 L18.26,71.47 L18.86,70.46 L19.45,69.47 L20.02,68.49 L20.56,67.52 L21.08,66.56 L21.56,65.60 L22.03,64.65 L22.45,63.69 L22.85,62.73 L23.22,61.76 L23.55,60.79 L23.85,59.81 L24.13,58.81 L24.37,57.80 L24.58,56.77 L24.77,55.73 L24.94,54.66 L25.09,53.58 L25.22,52.48 L25.34,51.35 L25.45,50.21 L25.55,49.04 L25.65,47.85 L25.76,46.65 L25.87,45.43 L26.00,44.19 L26.14,42.94 L26.30,41.68 L26.49,40.41 L27.64,39.84 L28.79,39.30 L29.93,38.78 L31.07,38.28 L32.20,37.79 L33.31,37.32 L34.40,36.85 L35.48,36.39 L36.54,35.94 L37.57,35.48 L38.58,35.01 L39.56,34.54 L40.52,34.05 L41.46,33.55 L42.37,33.02 L43.25,32.48 L44.12,31.91 L44.96,31.32 L45.78,30.70 L46.59,30.06 L47.38,29.38 L48.16,28.68 L48.92,27.95 L49.68,27.18 L50.44,26.39 L51.20,25.58 L51.95,24.74 L52.71,23.87 L53.48,22.99 L54.26,22.09 L55.06,21.18 L55.87,20.26 L56.70,19.33 L57.54,18.40 L58.42,17.48 L59.31,16.56 L60.58,16.78 L61.83,17.01 L63.06,17.27 L64.27,17.53 L65.47,17.80 L66.65,18.07 L67.81,18.34 L68.95,18.60 L70.07,18.85 L71.18,19.08 L72.27,19.30 L73.35,19.50 L74.41,19.67 L75.46,19.81 L76.50,19.92 L77.54,20.00 L78.57,20.05 L79.60,20.07 Z M79.60,46.43 L79.03,46.46 L78.47,46.55 L77.91,46.71 L77.36,46.92 L76.82,47.18 L76.29,47.51 L75.78,47.88 L75.29,48.31 L74.81,48.78 L74.36,49.29 L73.93,49.84 L73.53,50.43 L73.15,51.05 L72.79,51.69 L72.46,52.35 L72.15,53.03 L71.87,53.72 L71.61,54.42 L70.99,54.01 L70.36,53.61 L69.71,53.25 L69.06,52.90 L68.39,52.59 L67.72,52.32 L67.05,52.08 L66.38,51.89 L65.71,51.74 L65.05,51.63 L64.40,51.58 L63.77,51.57 L63.15,51.62 L62.56,51.72 L61.99,51.88 L61.45,52.08 L60.93,52.34 L60.46,52.65 L60.02,53.01 L59.61,53.42 L59.25,53.87 L58.93,54.36 L58.65,54.90 L58.41,55.47 L58.22,56.07 L58.07,56.70 L57.96,57.36 L57.90,58.04 L57.88,58.74 L57.89,59.46 L57.95,60.18 L58.04,60.91 L58.16,61.64 L58.31,62.37 L58.49,63.09 L58.69,63.81 L57.95,63.84 L57.20,63.89 L56.46,63.97 L55.73,64.08 L55.01,64.22 L54.31,64.40 L53.62,64.60 L52.96,64.84 L52.34,65.11 L51.74,65.41 L51.18,65.75 L50.67,66.12 L50.20,66.52 L49.78,66.95 L49.41,67.41 L49.09,67.90 L48.83,68.41 L48.63,68.94 L48.48,69.49 L48.39,70.05 L48.36,70.63 L48.39,71.22 L48.48,71.82 L48.62,72.42 L48.82,73.02 L49.08,73.62 L49.38,74.21 L49.73,74.80 L50.12,75.38 L50.55,75.95 L51.02,76.50 L51.52,77.04 L52.05,77.56 L52.60,78.06 L53.17,78.54 L53.75,79.00 L53.17,79.46 L52.60,79.94 L52.05,80.44 L51.52,80.96 L51.02,81.50 L50.55,82.05 L50.12,82.62 L49.73,83.20 L49.38,83.79 L49.08,84.38 L48.82,84.98 L48.62,85.58 L48.48,86.18 L48.39,86.78 L48.36,87.37 L48.39,87.95 L48.48,88.51 L48.63,89.06 L48.83,89.59 L49.09,90.10 L49.41,90.59 L49.78,91.05 L50.20,91.48 L50.67,91.88 L51.18,92.25 L51.74,92.59 L52.34,92.89 L52.96,93.16 L53.62,93.40 L54.31,93.60 L55.01,93.78 L55.73,93.92 L56.46,94.03 L57.20,94.11 L57.95,94.16 L58.69,94.19 L58.49,94.91 L58.31,95.63 L58.16,96.36 L58.04,97.09 L57.95,97.82 L57.89,98.54 L57.88,99.26 L57.90,99.96 L57.96,100.64 L58.07,101.30 L58.22,101.93 L58.41,102.53 L58.65,103.10 L58.93,103.64 L59.25,104.13 L59.61,104.58 L60.02,104.99 L60.46,105.35 L60.93,105.66 L61.45,105.92 L61.99,106.12 L62.56,106.28 L63.15,106.38 L63.77,106.43 L64.40,106.42 L65.05,106.37 L65.71,106.26 L66.38,106.11 L67.05,105.92 L67.72,105.68 L68.39,105.41 L69.06,105.10 L69.71,104.75 L70.36,104.39 L70.99,103.99 L71.61,103.58 L71.87,104.28 L72.15,104.97 L72.46,105.65 L72.79,106.31 L73.15,106.95 L73.53,107.57 L73.93,108.16 L74.36,108.71 L74.81,109.22 L75.29,109.69 L75.78,110.12 L76.29,110.49 L76.82,110.82 L77.36,111.08 L77.91,111.29 L78.47,111.45 L79.03,111.54 L79.60,111.57 L80.17,111.54 L80.73,111.45 L81.29,111.29 L81.84,111.08 L82.38,110.82 L82.91,110.49 L83.42,110.12 L83.91,109.69 L84.39,109.22 L84.84,108.71 L85.27,108.16 L85.67,107.57 L86.05,106.95 L86.41,106.31 L86.74,105.65 L87.05,104.97 L87.33,104.28 L87.59,103.58 L88.21,103.99 L88.84,104.39 L89.49,104.75 L90.14,105.10 L90.81,105.41 L91.48,105.68 L92.15,105.92 L92.82,106.11 L93.49,106.26 L94.15,106.37 L94.80,106.42 L95.43,106.43 L96.05,106.38 L96.64,106.28 L97.21,106.12 L97.75,105.92 L98.27,105.66 L98.74,105.35 L99.18,104.99 L99.59,104.58 L99.95,104.13 L100.27,103.64 L100.55,103.10 L100.79,102.53 L100.98,101.93 L101.13,101.30 L101.24,100.64 L101.30,99.96 L101.32,99.26 L101.31,98.54 L101.25,97.82 L101.16,97.09 L101.04,96.36 L100.89,95.63 L100.71,94.91 L100.51,94.19 L101.25,94.16 L102.00,94.11 L102.74,94.03 L103.47,93.92 L104.19,93.78 L104.89,93.60 L105.58,93.40 L106.24,93.16 L106.86,92.89 L107.46,92.59 L108.02,92.25 L108.53,91.88 L109.00,91.48 L109.42,91.05 L109.79,90.59 L110.11,90.10 L110.37,89.59 L110.57,89.06 L110.72,88.51 L110.81,87.95 L110.84,87.37 L110.81,86.78 L110.72,86.18 L110.58,85.58 L110.38,84.98 L110.12,84.38 L109.82,83.79 L109.47,83.20 L109.08,82.62 L108.65,82.05 L108.18,81.50 L107.68,80.96 L107.15,80.44 L106.60,79.94 L106.03,79.46 L105.45,79.00 L106.03,78.54 L106.60,78.06 L107.15,77.56 L107.68,77.04 L108.18,76.50 L108.65,75.95 L109.08,75.38 L109.47,74.80 L109.82,74.21 L110.12,73.62 L110.38,73.02 L110.58,72.42 L110.72,71.82 L110.81,71.22 L110.84,70.63 L110.81,70.05 L110.72,69.49 L110.57,68.94 L110.37,68.41 L110.11,67.90 L109.79,67.41 L109.42,66.95 L109.00,66.52 L108.53,66.12 L108.02,65.75 L107.46,65.41 L106.86,65.11 L106.24,64.84 L105.58,64.60 L104.89,64.40 L104.19,64.22 L103.47,64.08 L102.74,63.97 L102.00,63.89 L101.25,63.84 L100.51,63.81 L100.71,63.09 L100.89,62.37 L101.04,61.64 L101.16,60.91 L101.25,60.18 L101.31,59.46 L101.32,58.74 L101.30,58.04 L101.24,57.36 L101.13,56.70 L100.98,56.07 L100.79,55.47 L100.55,54.90 L100.27,54.36 L99.95,53.87 L99.59,53.42 L99.18,53.01 L98.74,52.65 L98.27,52.34 L97.75,52.08 L97.21,51.88 L96.64,51.72 L96.05,51.62 L95.43,51.57 L94.80,51.58 L94.15,51.63 L93.49,51.74 L92.82,51.89 L92.15,52.08 L91.48,52.32 L90.81,52.59 L90.14,52.90 L89.49,53.25 L88.84,53.61 L88.21,54.01 L87.59,54.42 L87.33,53.72 L87.05,53.03 L86.74,52.35 L86.41,51.69 L86.05,51.05 L85.67,50.43 L85.27,49.84 L84.84,49.29 L84.39,48.78 L83.91,48.31 L83.42,47.88 L82.91,47.51 L82.38,47.18 L81.84,46.92 L81.29,46.71 L80.73,46.55 L80.17,46.46 L79.60,46.43 Z" fill="url(#pg)" fill-rule="evenodd"/><path d="M79.60,46.43 L80.17,46.46 L80.73,46.55 L81.29,46.71 L81.84,46.92 L82.38,47.18 L82.91,47.51 L83.42,47.88 L83.91,48.31 L84.39,48.78 L84.84,49.29 L85.27,49.84 L85.67,50.43 L86.05,51.05 L86.41,51.69 L86.74,52.35 L87.05,53.03 L87.33,53.72 L87.59,54.42 L88.21,54.01 L88.84,53.61 L89.49,53.25 L90.14,52.90 L90.81,52.59 L91.48,52.32 L92.15,52.08 L92.82,51.89 L93.49,51.74 L94.15,51.63 L94.80,51.58 L95.43,51.57 L96.05,51.62 L96.64,51.72 L97.21,51.88 L97.75,52.08 L98.27,52.34 L98.74,52.65 L99.18,53.01 L99.59,53.42 L99.95,53.87 L100.27,54.36 L100.55,54.90 L100.79,55.47 L100.98,56.07 L101.13,56.70 L101.24,57.36 L101.30,58.04 L101.32,58.74 L101.31,59.46 L101.25,60.18 L101.16,60.91 L101.04,61.64 L100.89,62.37 L100.71,63.09 L100.51,63.81 L101.25,63.84 L102.00,63.89 L102.74,63.97 L103.47,64.08 L104.19,64.22 L104.89,64.40 L105.58,64.60 L106.24,64.84 L106.86,65.11 L107.46,65.41 L108.02,65.75 L108.53,66.12 L109.00,66.52 L109.42,66.95 L109.79,67.41 L110.11,67.90 L110.37,68.41 L110.57,68.94 L110.72,69.49 L110.81,70.05 L110.84,70.63 L110.81,71.22 L110.72,71.82 L110.58,72.42 L110.38,73.02 L110.12,73.62 L109.82,74.21 L109.47,74.80 L109.08,75.38 L108.65,75.95 L108.18,76.50 L107.68,77.04 L107.15,77.56 L106.60,78.06 L106.03,78.54 L105.45,79.00 L106.03,79.46 L106.60,79.94 L107.15,80.44 L107.68,80.96 L108.18,81.50 L108.65,82.05 L109.08,82.62 L109.47,83.20 L109.82,83.79 L110.12,84.38 L110.38,84.98 L110.58,85.58 L110.72,86.18 L110.81,86.78 L110.84,87.37 L110.81,87.95 L110.72,88.51 L110.57,89.06 L110.37,89.59 L110.11,90.10 L109.79,90.59 L109.42,91.05 L109.00,91.48 L108.53,91.88 L108.02,92.25 L107.46,92.59 L106.86,92.89 L106.24,93.16 L105.58,93.40 L104.89,93.60 L104.19,93.78 L103.47,93.92 L102.74,94.03 L102.00,94.11 L101.25,94.16 L100.51,94.19 L100.71,94.91 L100.89,95.63 L101.04,96.36 L101.16,97.09 L101.25,97.82 L101.31,98.54 L101.32,99.26 L101.30,99.96 L101.24,100.64 L101.13,101.30 L100.98,101.93 L100.79,102.53 L100.55,103.10 L100.27,103.64 L99.95,104.13 L99.59,104.58 L99.18,104.99 L98.74,105.35 L98.27,105.66 L97.75,105.92 L97.21,106.12 L96.64,106.28 L96.05,106.38 L95.43,106.43 L94.80,106.42 L94.15,106.37 L93.49,106.26 L92.82,106.11 L92.15,105.92 L91.48,105.68 L90.81,105.41 L90.14,105.10 L89.49,104.75 L88.84,104.39 L88.21,103.99 L87.59,103.58 L87.33,104.28 L87.05,104.97 L86.74,105.65 L86.41,106.31 L86.05,106.95 L85.67,107.57 L85.27,108.16 L84.84,108.71 L84.39,109.22 L83.91,109.69 L83.42,110.12 L82.91,110.49 L82.38,110.82 L81.84,111.08 L81.29,111.29 L80.73,111.45 L80.17,111.54 L79.60,111.57 L79.03,111.54 L78.47,111.45 L77.91,111.29 L77.36,111.08 L76.82,110.82 L76.29,110.49 L75.78,110.12 L75.29,109.69 L74.81,109.22 L74.36,108.71 L73.93,108.16 L73.53,107.57 L73.15,106.95 L72.79,106.31 L72.46,105.65 L72.15,104.97 L71.87,104.28 L71.61,103.58 L70.99,103.99 L70.36,104.39 L69.71,104.75 L69.06,105.10 L68.39,105.41 L67.72,105.68 L67.05,105.92 L66.38,106.11 L65.71,106.26 L65.05,106.37 L64.40,106.42 L63.77,106.43 L63.15,106.38 L62.56,106.28 L61.99,106.12 L61.45,105.92 L60.93,105.66 L60.46,105.35 L60.02,104.99 L59.61,104.58 L59.25,104.13 L58.93,103.64 L58.65,103.10 L58.41,102.53 L58.22,101.93 L58.07,101.30 L57.96,100.64 L57.90,99.96 L57.88,99.26 L57.89,98.54 L57.95,97.82 L58.04,97.09 L58.16,96.36 L58.31,95.63 L58.49,94.91 L58.69,94.19 L57.95,94.16 L57.20,94.11 L56.46,94.03 L55.73,93.92 L55.01,93.78 L54.31,93.60 L53.62,93.40 L52.96,93.16 L52.34,92.89 L51.74,92.59 L51.18,92.25 L50.67,91.88 L50.20,91.48 L49.78,91.05 L49.41,90.59 L49.09,90.10 L48.83,89.59 L48.63,89.06 L48.48,88.51 L48.39,87.95 L48.36,87.37 L48.39,86.78 L48.48,86.18 L48.62,85.58 L48.82,84.98 L49.08,84.38 L49.38,83.79 L49.73,83.20 L50.12,82.62 L50.55,82.05 L51.02,81.50 L51.52,80.96 L52.05,80.44 L52.60,79.94 L53.17,79.46 L53.75,79.00 L53.17,78.54 L52.60,78.06 L52.05,77.56 L51.52,77.04 L51.02,76.50 L50.55,75.95 L50.12,75.38 L49.73,74.80 L49.38,74.21 L49.08,73.62 L48.82,73.02 L48.62,72.42 L48.48,71.82 L48.39,71.22 L48.36,70.63 L48.39,70.05 L48.48,69.49 L48.63,68.94 L48.83,68.41 L49.09,67.90 L49.41,67.41 L49.78,66.95 L50.20,66.52 L50.67,66.12 L51.18,65.75 L51.74,65.41 L52.34,65.11 L52.96,64.84 L53.62,64.60 L54.31,64.40 L55.01,64.22 L55.73,64.08 L56.46,63.97 L57.20,63.89 L57.95,63.84 L58.69,63.81 L58.49,63.09 L58.31,62.37 L58.16,61.64 L58.04,60.91 L57.95,60.18 L57.89,59.46 L57.88,58.74 L57.90,58.04 L57.96,57.36 L58.07,56.70 L58.22,56.07 L58.41,55.47 L58.65,54.90 L58.93,54.36 L59.25,53.87 L59.61,53.42 L60.02,53.01 L60.46,52.65 L60.93,52.34 L61.45,52.08 L61.99,51.88 L62.56,51.72 L63.15,51.62 L63.77,51.57 L64.40,51.58 L65.05,51.63 L65.71,51.74 L66.38,51.89 L67.05,52.08 L67.72,52.32 L68.39,52.59 L69.06,52.90 L69.71,53.25 L70.36,53.61 L70.99,54.01 L71.61,54.42 L71.87,53.72 L72.15,53.03 L72.46,52.35 L72.79,51.69 L73.15,51.05 L73.53,50.43 L73.93,49.84 L74.36,49.29 L74.81,48.78 L75.29,48.31 L75.78,47.88 L76.29,47.51 L76.82,47.18 L77.36,46.92 L77.91,46.71 L78.47,46.55 L79.03,46.46 L79.60,46.43 Z M79.60,59.57 L79.26,59.55 L78.92,59.48 L78.57,59.37 L78.22,59.22 L77.85,59.02 L77.48,58.78 L77.08,58.51 L76.68,58.20 L76.25,57.87 L75.81,57.50 L75.35,57.12 L74.86,56.71 L74.36,56.29 L73.83,55.86 L73.28,55.42 L72.71,54.99 L72.13,54.55 L71.52,54.13 L71.28,54.83 L71.06,55.53 L70.85,56.21 L70.67,56.89 L70.49,57.54 L70.33,58.18 L70.18,58.80 L70.03,59.38 L69.89,59.94 L69.74,60.46 L69.59,60.94 L69.44,61.40 L69.27,61.81 L69.09,62.18 L68.89,62.51 L68.68,62.81 L68.44,63.06 L68.18,63.28 L67.89,63.46 L67.58,63.61 L67.23,63.72 L66.85,63.81 L66.44,63.86 L66.00,63.89 L65.52,63.90 L65.01,63.89 L64.47,63.87 L63.90,63.84 L63.30,63.80 L62.67,63.75 L62.01,63.71 L61.33,63.67 L60.63,63.64 L59.91,63.62 L59.19,63.62 L58.45,63.63 L58.66,64.34 L58.89,65.03 L59.13,65.71 L59.37,66.36 L59.62,67.00 L59.87,67.61 L60.10,68.19 L60.33,68.75 L60.54,69.29 L60.73,69.79 L60.89,70.28 L61.03,70.73 L61.14,71.16 L61.21,71.57 L61.25,71.96 L61.25,72.32 L61.21,72.67 L61.12,73.00 L61.00,73.31 L60.83,73.62 L60.61,73.91 L60.36,74.20 L60.06,74.49 L59.72,74.77 L59.34,75.06 L58.92,75.35 L58.47,75.65 L57.98,75.96 L57.47,76.28 L56.94,76.62 L56.38,76.97 L55.81,77.34 L55.22,77.72 L54.63,78.13 L54.04,78.55 L53.45,79.00 L54.04,79.45 L54.63,79.87 L55.22,80.28 L55.81,80.66 L56.38,81.03 L56.94,81.38 L57.47,81.72 L57.98,82.04 L58.47,82.35 L58.92,82.65 L59.34,82.94 L59.72,83.23 L60.06,83.51 L60.36,83.80 L60.61,84.09 L60.83,84.38 L61.00,84.69 L61.12,85.00 L61.21,85.33 L61.25,85.68 L61.25,86.04 L61.21,86.43 L61.14,86.84 L61.03,87.27 L60.89,87.72 L60.73,88.21 L60.54,88.71 L60.33,89.25 L60.10,89.81 L59.87,90.39 L59.62,91.00 L59.37,91.64 L59.13,92.29 L58.89,92.97 L58.66,93.66 L58.45,94.37 L59.19,94.38 L59.91,94.38 L60.63,94.36 L61.33,94.33 L62.01,94.29 L62.67,94.25 L63.30,94.20 L63.90,94.16 L64.47,94.13 L65.01,94.11 L65.52,94.10 L66.00,94.11 L66.44,94.14 L66.85,94.19 L67.23,94.28 L67.58,94.39 L67.89,94.54 L68.18,94.72 L68.44,94.94 L68.68,95.19 L68.89,95.49 L69.09,95.82 L69.27,96.19 L69.44,96.60 L69.59,97.06 L69.74,97.54 L69.89,98.06 L70.03,98.62 L70.18,99.20 L70.33,99.82 L70.49,100.46 L70.67,101.11 L70.85,101.79 L71.06,102.47 L71.28,103.17 L71.52,103.87 L72.13,103.45 L72.71,103.01 L73.28,102.58 L73.83,102.14 L74.36,101.71 L74.86,101.29 L75.35,100.88 L75.81,100.50 L76.25,100.13 L76.68,99.80 L77.08,99.49 L77.48,99.22 L77.85,98.98 L78.22,98.78 L78.57,98.63 L78.92,98.52 L79.26,98.45 L79.60,98.43 L79.94,98.45 L80.28,98.52 L80.63,98.63 L80.98,98.78 L81.35,98.98 L81.72,99.22 L82.12,99.49 L82.52,99.80 L82.95,100.13 L83.39,100.50 L83.85,100.88 L84.34,101.29 L84.84,101.71 L85.37,102.14 L85.92,102.58 L86.49,103.01 L87.07,103.45 L87.68,103.87 L87.92,103.17 L88.14,102.47 L88.35,101.79 L88.53,101.11 L88.71,100.46 L88.87,99.82 L89.02,99.20 L89.17,98.62 L89.31,98.06 L89.46,97.54 L89.61,97.06 L89.76,96.60 L89.93,96.19 L90.11,95.82 L90.31,95.49 L90.52,95.19 L90.76,94.94 L91.02,94.72 L91.31,94.54 L91.62,94.39 L91.97,94.28 L92.35,94.19 L92.76,94.14 L93.20,94.11 L93.68,94.10 L94.19,94.11 L94.73,94.13 L95.30,94.16 L95.90,94.20 L96.53,94.25 L97.19,94.29 L97.87,94.33 L98.57,94.36 L99.29,94.38 L100.01,94.38 L100.75,94.37 L100.54,93.66 L100.31,92.97 L100.07,92.29 L99.83,91.64 L99.58,91.00 L99.33,90.39 L99.10,89.81 L98.87,89.25 L98.66,88.71 L98.47,88.21 L98.31,87.72 L98.17,87.27 L98.06,86.84 L97.99,86.43 L97.95,86.04 L97.95,85.68 L97.99,85.33 L98.08,85.00 L98.20,84.69 L98.37,84.38 L98.59,84.09 L98.84,83.80 L99.14,83.51 L99.48,83.23 L99.86,82.94 L100.28,82.65 L100.73,82.35 L101.22,82.04 L101.73,81.72 L102.26,81.38 L102.82,81.03 L103.39,80.66 L103.98,80.28 L104.57,79.87 L105.16,79.45 L105.75,79.00 L105.16,78.55 L104.57,78.13 L103.98,77.72 L103.39,77.34 L102.82,76.97 L102.26,76.62 L101.73,76.28 L101.22,75.96 L100.73,75.65 L100.28,75.35 L99.86,75.06 L99.48,74.77 L99.14,74.49 L98.84,74.20 L98.59,73.91 L98.37,73.62 L98.20,73.31 L98.08,73.00 L97.99,72.67 L97.95,72.32 L97.95,71.96 L97.99,71.57 L98.06,71.16 L98.17,70.73 L98.31,70.28 L98.47,69.79 L98.66,69.29 L98.87,68.75 L99.10,68.19 L99.33,67.61 L99.58,67.00 L99.83,66.36 L100.07,65.71 L100.31,65.03 L100.54,64.34 L100.75,63.63 L100.01,63.62 L99.29,63.62 L98.57,63.64 L97.87,63.67 L97.19,63.71 L96.53,63.75 L95.90,63.80 L95.30,63.84 L94.73,63.87 L94.19,63.89 L93.68,63.90 L93.20,63.89 L92.76,63.86 L92.35,63.81 L91.97,63.72 L91.62,63.61 L91.31,63.46 L91.02,63.28 L90.76,63.06 L90.52,62.81 L90.31,62.51 L90.11,62.18 L89.93,61.81 L89.76,61.40 L89.61,60.94 L89.46,60.46 L89.31,59.94 L89.17,59.38 L89.02,58.80 L88.87,58.18 L88.71,57.54 L88.53,56.89 L88.35,56.21 L88.14,55.53 L87.92,54.83 L87.68,54.13 L87.07,54.55 L86.49,54.99 L85.92,55.42 L85.37,55.86 L84.84,56.29 L84.34,56.71 L83.85,57.12 L83.39,57.50 L82.95,57.87 L82.52,58.20 L82.12,58.51 L81.72,58.78 L81.35,59.02 L80.98,59.22 L80.63,59.37 L80.28,59.48 L79.94,59.55 L79.60,59.57 Z" fill="#5f84b8" fill-opacity=".33" fill-rule="evenodd"/><g stroke="#22509a" stroke-opacity=".62"><line x1="79.60" y1="59.87" x2="79.60" y2="8.13" stroke-width="1.00"/><line x1="80.76" y1="59.61" x2="83.82" y2="8.55" stroke-width="1.00"/><line x1="82.02" y1="58.85" x2="87.92" y2="9.79" stroke-width="0.98"/><line x1="83.47" y1="57.69" x2="91.80" y2="11.76" stroke-width="0.96"/><line x1="85.15" y1="56.27" x2="95.39" y2="14.29" stroke-width="0.93"/><line x1="87.07" y1="54.78" x2="98.66" y2="17.22" stroke-width="0.90"/><line x1="89.21" y1="53.40" x2="101.62" y2="20.34" stroke-width="0.87"/><line x1="91.48" y1="52.32" x2="104.33" y2="23.46" stroke-width="0.84"/><line x1="93.78" y1="51.69" x2="106.88" y2="26.43" stroke-width="0.82"/><line x1="95.96" y1="51.61" x2="109.40" y2="29.13" stroke-width="0.80"/><line x1="97.90" y1="52.15" x2="111.99" y2="31.49" stroke-width="0.79"/><line x1="99.48" y1="53.30" x2="114.78" y2="33.51" stroke-width="0.79"/><line x1="100.59" y1="54.98" x2="117.82" y2="35.25" stroke-width="0.80"/><line x1="101.20" y1="57.08" x2="121.16" y2="36.81" stroke-width="0.82"/><line x1="101.31" y1="59.46" x2="124.78" y2="38.32" stroke-width="0.84"/><line x1="100.98" y1="61.95" x2="128.59" y2="39.93" stroke-width="0.87"/><line x1="100.33" y1="64.41" x2="132.47" y2="41.78" stroke-width="0.90"/><line x1="99.50" y1="66.70" x2="136.26" y2="43.99" stroke-width="0.93"/><line x1="98.67" y1="68.74" x2="139.78" y2="46.61" stroke-width="0.96"/><line x1="98.02" y1="70.47" x2="142.85" y2="49.70" stroke-width="0.98"/><line x1="97.68" y1="71.90" x2="145.29" y2="53.22" stroke-width="1.00"/><line x1="97.79" y1="73.09" x2="147.00" y2="57.10" stroke-width="1.00"/><line x1="98.40" y1="74.11" x2="147.90" y2="61.24" stroke-width="1.00"/><line x1="99.51" y1="75.08" x2="147.99" y2="65.53" stroke-width="0.98"/><line x1="101.06" y1="76.09" x2="147.32" y2="69.83" stroke-width="0.96"/><line x1="102.93" y1="77.25" x2="146.02" y2="74.02" stroke-width="0.93"/><line x1="104.94" y1="78.62" x2="144.25" y2="78.03" stroke-width="0.90"/><line x1="106.92" y1="80.23" x2="142.19" y2="81.81" stroke-width="0.87"/><line x1="108.65" y1="82.05" x2="140.06" y2="85.35" stroke-width="0.84"/><line x1="109.96" y1="84.04" x2="138.03" y2="88.70" stroke-width="0.82"/><line x1="110.70" y1="86.10" x2="136.24" y2="91.93" stroke-width="0.80"/><line x1="110.79" y1="88.11" x2="134.80" y2="95.13" stroke-width="0.79"/><line x1="110.19" y1="89.96" x2="133.74" y2="98.40" stroke-width="0.79"/><line x1="108.94" y1="91.54" x2="133.02" y2="101.83" stroke-width="0.80"/><line x1="107.12" y1="92.77" x2="132.57" y2="105.49" stroke-width="0.82"/><line x1="104.89" y1="93.60" x2="132.25" y2="109.40" stroke-width="0.84"/><line x1="102.42" y1="94.06" x2="131.89" y2="113.52" stroke-width="0.87"/><line x1="99.88" y1="94.20" x2="131.33" y2="117.78" stroke-width="0.90"/><line x1="97.44" y1="94.13" x2="130.41" y2="122.07" stroke-width="0.93"/><line x1="95.25" y1="93.97" x2="129.00" y2="126.23" stroke-width="0.96"/><line x1="93.40" y1="93.88" x2="127.01" y2="130.10" stroke-width="0.98"/><line x1="91.94" y1="94.01" x2="124.42" y2="133.51" stroke-width="1.00"/><line x1="90.84" y1="94.47" x2="121.26" y2="136.34" stroke-width="1.00"/><line x1="90.06" y1="95.37" x2="117.59" y2="138.47" stroke-width="1.00"/><line x1="89.48" y1="96.73" x2="113.55" y2="139.88" stroke-width="0.98"/><line x1="89.00" y1="98.51" x2="109.25" y2="140.57" stroke-width="0.96"/><line x1="88.47" y1="100.65" x2="104.86" y2="140.63" stroke-width="0.93"/><line x1="87.79" y1="102.99" x2="100.50" y2="140.18" stroke-width="0.90"/><line x1="86.87" y1="105.36" x2="96.27" y2="139.40" stroke-width="0.87"/><line x1="85.67" y1="107.57" x2="92.24" y2="138.46" stroke-width="0.84"/><line x1="84.19" y1="109.43" x2="88.43" y2="137.56" stroke-width="0.82"/><line x1="82.46" y1="110.77" x2="84.81" y2="136.86" stroke-width="0.80"/><line x1="80.57" y1="111.48" x2="81.32" y2="136.48" stroke-width="0.79"/><line x1="78.63" y1="111.48" x2="77.88" y2="136.48" stroke-width="0.79"/><line x1="76.74" y1="110.77" x2="74.39" y2="136.86" stroke-width="0.80"/><line x1="75.01" y1="109.43" x2="70.77" y2="137.56" stroke-width="0.82"/><line x1="73.53" y1="107.57" x2="66.96" y2="138.46" stroke-width="0.84"/><line x1="72.33" y1="105.36" x2="62.93" y2="139.40" stroke-width="0.87"/><line x1="71.41" y1="102.99" x2="58.70" y2="140.18" stroke-width="0.90"/><line x1="70.73" y1="100.65" x2="54.34" y2="140.63" stroke-width="0.93"/><line x1="70.20" y1="98.51" x2="49.95" y2="140.57" stroke-width="0.96"/><line x1="69.72" y1="96.73" x2="45.65" y2="139.88" stroke-width="0.98"/><line x1="69.14" y1="95.37" x2="41.61" y2="138.47" stroke-width="1.00"/><line x1="68.36" y1="94.47" x2="37.94" y2="136.34" stroke-width="1.00"/><line x1="67.26" y1="94.01" x2="34.78" y2="133.51" stroke-width="1.00"/><line x1="65.80" y1="93.88" x2="32.19" y2="130.10" stroke-width="0.98"/><line x1="63.95" y1="93.97" x2="30.20" y2="126.23" stroke-width="0.96"/><line x1="61.76" y1="94.13" x2="28.79" y2="122.07" stroke-width="0.93"/><line x1="59.32" y1="94.20" x2="27.87" y2="117.78" stroke-width="0.90"/><line x1="56.78" y1="94.06" x2="27.31" y2="113.52" stroke-width="0.87"/><line x1="54.31" y1="93.60" x2="26.95" y2="109.40" stroke-width="0.84"/><line x1="52.08" y1="92.77" x2="26.63" y2="105.49" stroke-width="0.82"/><line x1="50.26" y1="91.54" x2="26.18" y2="101.83" stroke-width="0.80"/><line x1="49.01" y1="89.96" x2="25.46" y2="98.40" stroke-width="0.79"/><line x1="48.41" y1="88.11" x2="24.40" y2="95.13" stroke-width="0.79"/><line x1="48.50" y1="86.10" x2="22.96" y2="91.93" stroke-width="0.80"/><line x1="49.24" y1="84.04" x2="21.17" y2="88.70" stroke-width="0.82"/><line x1="50.55" y1="82.05" x2="19.14" y2="85.35" stroke-width="0.84"/><line x1="52.28" y1="80.23" x2="17.01" y2="81.81" stroke-width="0.87"/><line x1="54.26" y1="78.62" x2="14.95" y2="78.03" stroke-width="0.90"/><line x1="56.27" y1="77.25" x2="13.18" y2="74.02" stroke-width="0.93"/><line x1="58.14" y1="76.09" x2="11.88" y2="69.83" stroke-width="0.96"/><line x1="59.69" y1="75.08" x2="11.21" y2="65.53" stroke-width="0.98"/><line x1="60.80" y1="74.11" x2="11.30" y2="61.24" stroke-width="1.00"/><line x1="61.41" y1="73.09" x2="12.20" y2="57.10" stroke-width="1.00"/><line x1="61.52" y1="71.90" x2="13.91" y2="53.22" stroke-width="1.00"/><line x1="61.18" y1="70.47" x2="16.35" y2="49.70" stroke-width="0.98"/><line x1="60.53" y1="68.74" x2="19.42" y2="46.61" stroke-width="0.96"/><line x1="59.70" y1="66.70" x2="22.94" y2="43.99" stroke-width="0.93"/><line x1="58.87" y1="64.41" x2="26.73" y2="41.78" stroke-width="0.90"/><line x1="58.22" y1="61.95" x2="30.61" y2="39.93" stroke-width="0.87"/><line x1="57.89" y1="59.46" x2="34.42" y2="38.32" stroke-width="0.84"/><line x1="58.00" y1="57.08" x2="38.04" y2="36.81" stroke-width="0.82"/><line x1="58.61" y1="54.98" x2="41.38" y2="35.25" stroke-width="0.80"/><line x1="59.72" y1="53.30" x2="44.42" y2="33.51" stroke-width="0.79"/><line x1="61.30" y1="52.15" x2="47.21" y2="31.49" stroke-width="0.79"/><line x1="63.24" y1="51.61" x2="49.80" y2="29.13" stroke-width="0.80"/><line x1="65.42" y1="51.69" x2="52.32" y2="26.43" stroke-width="0.82"/><line x1="67.72" y1="52.32" x2="54.87" y2="23.46" stroke-width="0.84"/><line x1="69.99" y1="53.40" x2="57.58" y2="20.34" stroke-width="0.87"/><line x1="72.13" y1="54.78" x2="60.54" y2="17.22" stroke-width="0.90"/><line x1="74.05" y1="56.27" x2="63.81" y2="14.29" stroke-width="0.93"/><line x1="75.73" y1="57.69" x2="67.40" y2="11.76" stroke-width="0.96"/><line x1="77.18" y1="58.85" x2="71.28" y2="9.79" stroke-width="0.98"/><line x1="78.44" y1="59.61" x2="75.38" y2="8.55" stroke-width="1.00"/><line x1="80.57" y1="46.52" x2="81.32" y2="21.52" stroke-width="0.79"/><line x1="82.46" y1="47.23" x2="84.81" y2="21.14" stroke-width="0.80"/><line x1="84.19" y1="48.57" x2="88.43" y2="20.44" stroke-width="0.82"/><line x1="85.67" y1="50.43" x2="92.24" y2="19.54" stroke-width="0.84"/><line x1="86.87" y1="52.64" x2="96.27" y2="18.60" stroke-width="0.87"/><line x1="87.79" y1="55.01" x2="100.50" y2="17.82" stroke-width="0.90"/><line x1="88.47" y1="57.35" x2="104.86" y2="17.37" stroke-width="0.93"/><line x1="89.00" y1="59.49" x2="109.25" y2="17.43" stroke-width="0.96"/><line x1="89.48" y1="61.27" x2="113.55" y2="18.12" stroke-width="0.98"/><line x1="90.06" y1="62.63" x2="117.59" y2="19.53" stroke-width="1.00"/><line x1="90.84" y1="63.53" x2="121.26" y2="21.66" stroke-width="1.00"/><line x1="91.94" y1="63.99" x2="124.42" y2="24.49" stroke-width="1.00"/><line x1="93.40" y1="64.12" x2="127.01" y2="27.90" stroke-width="0.98"/><line x1="95.25" y1="64.03" x2="129.00" y2="31.77" stroke-width="0.96"/><line x1="97.44" y1="63.87" x2="130.41" y2="35.93" stroke-width="0.93"/><line x1="99.88" y1="63.80" x2="131.33" y2="40.22" stroke-width="0.90"/><line x1="102.42" y1="63.94" x2="131.89" y2="44.48" stroke-width="0.87"/><line x1="104.89" y1="64.40" x2="132.25" y2="48.60" stroke-width="0.84"/><line x1="107.12" y1="65.23" x2="132.57" y2="52.51" stroke-width="0.82"/><line x1="108.94" y1="66.46" x2="133.02" y2="56.17" stroke-width="0.80"/><line x1="110.19" y1="68.04" x2="133.74" y2="59.60" stroke-width="0.79"/><line x1="110.79" y1="69.89" x2="134.80" y2="62.87" stroke-width="0.79"/><line x1="110.70" y1="71.90" x2="136.24" y2="66.07" stroke-width="0.80"/><line x1="109.96" y1="73.96" x2="138.03" y2="69.30" stroke-width="0.82"/><line x1="108.65" y1="75.95" x2="140.06" y2="72.65" stroke-width="0.84"/><line x1="106.92" y1="77.77" x2="142.19" y2="76.19" stroke-width="0.87"/><line x1="104.94" y1="79.38" x2="144.25" y2="79.97" stroke-width="0.90"/><line x1="102.93" y1="80.75" x2="146.02" y2="83.98" stroke-width="0.93"/><line x1="101.06" y1="81.91" x2="147.32" y2="88.17" stroke-width="0.96"/><line x1="99.51" y1="82.92" x2="147.99" y2="92.47" stroke-width="0.98"/><line x1="98.40" y1="83.89" x2="147.90" y2="96.76" stroke-width="1.00"/><line x1="97.79" y1="84.91" x2="147.00" y2="100.90" stroke-width="1.00"/><line x1="97.68" y1="86.10" x2="145.29" y2="104.78" stroke-width="1.00"/><line x1="98.02" y1="87.53" x2="142.85" y2="108.30" stroke-width="0.98"/><line x1="98.67" y1="89.26" x2="139.78" y2="111.39" stroke-width="0.96"/><line x1="99.50" y1="91.30" x2="136.26" y2="114.01" stroke-width="0.93"/><line x1="100.33" y1="93.59" x2="132.47" y2="116.22" stroke-width="0.90"/><line x1="100.98" y1="96.05" x2="128.59" y2="118.07" stroke-width="0.87"/><line x1="101.31" y1="98.54" x2="124.78" y2="119.68" stroke-width="0.84"/><line x1="101.20" y1="100.92" x2="121.16" y2="121.19" stroke-width="0.82"/><line x1="100.59" y1="103.02" x2="117.82" y2="122.75" stroke-width="0.80"/><line x1="99.48" y1="104.70" x2="114.78" y2="124.49" stroke-width="0.79"/><line x1="97.90" y1="105.85" x2="111.99" y2="126.51" stroke-width="0.79"/><line x1="95.96" y1="106.39" x2="109.40" y2="128.87" stroke-width="0.80"/><line x1="93.78" y1="106.31" x2="106.88" y2="131.57" stroke-width="0.82"/><line x1="91.48" y1="105.68" x2="104.33" y2="134.54" stroke-width="0.84"/><line x1="89.21" y1="104.60" x2="101.62" y2="137.66" stroke-width="0.87"/><line x1="87.07" y1="103.22" x2="98.66" y2="140.78" stroke-width="0.90"/><line x1="85.15" y1="101.73" x2="95.39" y2="143.71" stroke-width="0.93"/><line x1="83.47" y1="100.31" x2="91.80" y2="146.24" stroke-width="0.96"/><line x1="82.02" y1="99.15" x2="87.92" y2="148.21" stroke-width="0.98"/><line x1="80.76" y1="98.39" x2="83.82" y2="149.45" stroke-width="1.00"/><line x1="79.60" y1="98.13" x2="79.60" y2="149.87" stroke-width="1.00"/><line x1="78.44" y1="98.39" x2="75.38" y2="149.45" stroke-width="1.00"/><line x1="77.18" y1="99.15" x2="71.28" y2="148.21" stroke-width="0.98"/><line x1="75.73" y1="100.31" x2="67.40" y2="146.24" stroke-width="0.96"/><line x1="74.05" y1="101.73" x2="63.81" y2="143.71" stroke-width="0.93"/><line x1="72.13" y1="103.22" x2="60.54" y2="140.78" stroke-width="0.90"/><line x1="69.99" y1="104.60" x2="57.58" y2="137.66" stroke-width="0.87"/><line x1="67.72" y1="105.68" x2="54.87" y2="134.54" stroke-width="0.84"/><line x1="65.42" y1="106.31" x2="52.32" y2="131.57" stroke-width="0.82"/><line x1="63.24" y1="106.39" x2="49.80" y2="128.87" stroke-width="0.80"/><line x1="61.30" y1="105.85" x2="47.21" y2="126.51" stroke-width="0.79"/><line x1="59.72" y1="104.70" x2="44.42" y2="124.49" stroke-width="0.79"/><line x1="58.61" y1="103.02" x2="41.38" y2="122.75" stroke-width="0.80"/><line x1="58.00" y1="100.92" x2="38.04" y2="121.19" stroke-width="0.82"/><line x1="57.89" y1="98.54" x2="34.42" y2="119.68" stroke-width="0.84"/><line x1="58.22" y1="96.05" x2="30.61" y2="118.07" stroke-width="0.87"/><line x1="58.87" y1="93.59" x2="26.73" y2="116.22" stroke-width="0.90"/><line x1="59.70" y1="91.30" x2="22.94" y2="114.01" stroke-width="0.93"/><line x1="60.53" y1="89.26" x2="19.42" y2="111.39" stroke-width="0.96"/><line x1="61.18" y1="87.53" x2="16.35" y2="108.30" stroke-width="0.98"/><line x1="61.52" y1="86.10" x2="13.91" y2="104.78" stroke-width="1.00"/><line x1="61.41" y1="84.91" x2="12.20" y2="100.90" stroke-width="1.00"/><line x1="60.80" y1="83.89" x2="11.30" y2="96.76" stroke-width="1.00"/><line x1="59.69" y1="82.92" x2="11.21" y2="92.47" stroke-width="0.98"/><line x1="58.14" y1="81.91" x2="11.88" y2="88.17" stroke-width="0.96"/><line x1="56.27" y1="80.75" x2="13.18" y2="83.98" stroke-width="0.93"/><line x1="54.26" y1="79.38" x2="14.95" y2="79.97" stroke-width="0.90"/><line x1="52.28" y1="77.77" x2="17.01" y2="76.19" stroke-width="0.87"/><line x1="50.55" y1="75.95" x2="19.14" y2="72.65" stroke-width="0.84"/><line x1="49.24" y1="73.96" x2="21.17" y2="69.30" stroke-width="0.82"/><line x1="48.50" y1="71.90" x2="22.96" y2="66.07" stroke-width="0.80"/><line x1="48.41" y1="69.89" x2="24.40" y2="62.87" stroke-width="0.79"/><line x1="49.01" y1="68.04" x2="25.46" y2="59.60" stroke-width="0.79"/><line x1="50.26" y1="66.46" x2="26.18" y2="56.17" stroke-width="0.80"/><line x1="52.08" y1="65.23" x2="26.63" y2="52.51" stroke-width="0.82"/><line x1="54.31" y1="64.40" x2="26.95" y2="48.60" stroke-width="0.84"/><line x1="56.78" y1="63.94" x2="27.31" y2="44.48" stroke-width="0.87"/><line x1="59.32" y1="63.80" x2="27.87" y2="40.22" stroke-width="0.90"/><line x1="61.76" y1="63.87" x2="28.79" y2="35.93" stroke-width="0.93"/><line x1="63.95" y1="64.03" x2="30.20" y2="31.77" stroke-width="0.96"/><line x1="65.80" y1="64.12" x2="32.19" y2="27.90" stroke-width="0.98"/><line x1="67.26" y1="63.99" x2="34.78" y2="24.49" stroke-width="1.00"/><line x1="68.36" y1="63.53" x2="37.94" y2="21.66" stroke-width="1.00"/><line x1="69.14" y1="62.63" x2="41.61" y2="19.53" stroke-width="1.00"/><line x1="69.72" y1="61.27" x2="45.65" y2="18.12" stroke-width="0.98"/><line x1="70.20" y1="59.49" x2="49.95" y2="17.43" stroke-width="0.96"/><line x1="70.73" y1="57.35" x2="54.34" y2="17.37" stroke-width="0.93"/><line x1="71.41" y1="55.01" x2="58.70" y2="17.82" stroke-width="0.90"/><line x1="72.33" y1="52.64" x2="62.93" y2="18.60" stroke-width="0.87"/><line x1="73.53" y1="50.43" x2="66.96" y2="19.54" stroke-width="0.84"/><line x1="75.01" y1="48.57" x2="70.77" y2="20.44" stroke-width="0.82"/><line x1="76.74" y1="47.23" x2="74.39" y2="21.14" stroke-width="0.80"/><line x1="78.63" y1="46.52" x2="77.88" y2="21.52" stroke-width="0.79"/></g></svg>
<div class="r" style="left:1.00px;top:303.00px;width:102.80px;height:17.40px;background:#295070;border-radius:0 4px 4px 0;"></div>
<svg class="r" style="left:5.60px;top:307.60px;overflow:visible;" width="9.6" height="8" viewBox="0 0 9.6 8"><circle cx="1.1" cy="4" r=".85" fill="#dfe9f2"/><rect x="3.3" y="1.9" width="1.7" height="4.3" rx=".3" fill="#dfe9f2"/><rect x="6.5" y=".2" width="2.2" height="7.6" rx=".3" fill="#dfe9f2"/></svg>
<div class="t" style="top:306px;font-size:5.4px;line-height:5.4px;color:#6ea3d0;left:18.20px;letter-spacing:-0.399px;">Repeat</div>
<div class="t" style="top:311px;font-size:7.0px;line-height:7.0px;color:#fff;left:18.20px;font-weight:700;letter-spacing:-0.580px;">Transform</div>
<svg class="r" style="left:55.60px;top:307.40px;overflow:visible;" width="8.4" height="8.4" viewBox="0 0 8.4 8.4"><path d="M4.2 .4v7.6M.4 4.2h7.6M3 1.6L4.2.4l1.2 1.2M3 6.8l1.2 1.2 1.2-1.2M1.6 3L.4 4.2l1.2 1.2M6.8 3l1.2 1.2-1.2 1.2" fill="none" stroke="#d3e0ec" stroke-width=".95"/></svg>
<svg class="r" style="left:66.60px;top:307.40px;overflow:visible;" width="8.4" height="8.4" viewBox="0 0 8.4 8.4"><circle cx="4.2" cy="4.2" r="3.6" fill="none" stroke="#d3e0ec" stroke-width="1"/><ellipse cx="4.2" cy="4.2" rx="1.5" ry="3.6" fill="none" stroke="#d3e0ec" stroke-width=".75"/><path d="M.6 4.2h7.2" stroke="#d3e0ec" stroke-width=".75"/></svg>
<svg class="r" style="left:77.80px;top:307.40px;overflow:visible;" width="8.4" height="8.4" viewBox="0 0 8.4 8.4"><rect x=".6" y=".6" width="7.2" height="7.2" rx=".6" fill="none" stroke="#d3e0ec" stroke-width="1.05"/><path d="M4.4 .6v3.4h3.4" fill="none" stroke="#d3e0ec" stroke-width=".9"/></svg>
<svg class="r" style="left:89.20px;top:307.40px;overflow:visible;" width="8.4" height="8.4" viewBox="0 0 8.4 8.4"><path d="M1.6 7A3.7 3.7 0 1 1 7.9 4.6" fill="none" stroke="#d3e0ec" stroke-width="1.05"/><circle cx="4.3" cy="4.5" r="1.25" fill="#d3e0ec"/><path d="M6.2 2.4l1.9-.2-.2 2" fill="none" stroke="#d3e0ec" stroke-width=".9"/></svg>
<div class="r" style="left:1.00px;top:479.70px;width:848.00px;height:12.20px;background:#2d2d2d;border-radius:0 0 4px 4px;"></div>
<div class="t" style="top:484px;font-size:6.4px;line-height:6.4px;color:#a8a8a8;left:3.60px;letter-spacing:-0.315px;">Zoom</div>
<div class="r" style="left:23.40px;top:481.40px;width:27.60px;height:10.00px;background:#3b3b3b;border-radius:2px;"></div>
<div class="t" style="top:484px;font-size:6.6px;line-height:6.6px;color:#fff;left:29.60px;font-weight:700;letter-spacing:-0.159px;">100%</div>
<div class="r" style="left:56.60px;top:486.20px;width:47.00px;height:1.10px;background:#4c4c4c;border-radius:1px;"></div>
<div class="r" style="left:67.60px;top:483.20px;width:7.00px;height:7.00px;background:#a0a0a0;border-radius:50%;"></div>
<div class="t" style="top:484px;font-size:6.6px;line-height:6.6px;color:#ddd;left:114.00px;font-weight:700;">Fit</div>
<div class="t" style="top:484px;font-size:6.6px;line-height:6.6px;color:#e6e6e6;left:764.60px;font-weight:700;letter-spacing:-0.243px;">Display</div>
<svg class="r" style="left:789.60px;top:485.00px;overflow:visible;" width="5" height="3.4" viewBox="0 0 5 3.4"><path d="M.6 .6L2.5 2.6 4.4 .6" fill="none" stroke="#ccc" stroke-width=".8"/></svg>
<svg class="r" style="left:808.40px;top:482.80px;overflow:visible;" width="8.6" height="7.6" viewBox="0 0 8.6 7.6"><rect x=".5" y=".8" width="5.6" height="4.2" rx=".8" fill="none" stroke="#ccc" stroke-width=".8"/><rect x="3" y="3" width="5" height="3.6" rx=".8" fill="#2d2d2d" stroke="#ccc" stroke-width=".8"/></svg>
<svg class="r" style="left:829.00px;top:482.80px;overflow:visible;" width="8" height="7.6" viewBox="0 0 8 7.6"><path d="M.5 2.6V.6h2.2M5.3 .6h2.2v2M7.5 5v2H5.3M2.7 7H.5V5" fill="none" stroke="#ccc" stroke-width=".9"/></svg>
<div class="r" style="left:311.00px;top:67.00px;width:528.60px;height:281.40px;background:#1e1e1e;border-radius:5px;box-shadow:0 7px 14px 0px rgba(0,0,0,.46),0 0 0 .6px rgba(0,0,0,.6);"></div>
<div class="r" style="left:311.00px;top:67.00px;width:528.60px;height:14.60px;background:#292929;border-radius:5px 5px 0 0;border-top:0.7px solid #5a5a5a;"></div>
<div class="r" style="left:314.50px;top:70.90px;width:7.00px;height:7.00px;background:#ed6a5e;border-radius:50%;"></div>
<div class="r" style="left:324.90px;top:70.90px;width:7.00px;height:7.00px;background:#f5bf4f;border-radius:50%;"></div>
<div class="r" style="left:335.50px;top:70.90px;width:7.00px;height:7.00px;background:#61c554;border-radius:50%;"></div>
<div class="t" style="top:71px;font-size:7.4px;line-height:7.4px;color:#d6d6d6;left:543.00px;font-weight:700;letter-spacing:-0.108px;">Node reference list</div>
<div class="r" style="left:311.00px;top:81.60px;width:123.00px;height:14.60px;background:#1b1b1b;border-bottom:0.7px solid #303030;"></div>
<div class="t" style="top:87px;font-size:6.6px;line-height:6.6px;color:#fff;left:325.40px;font-weight:700;letter-spacing:-0.395px;">Node types</div>
<div class="r" style="left:420.00px;top:84.00px;width:0.70px;height:10.00px;background:#3a3a3a;"></div>
<div class="r" style="left:434.00px;top:81.60px;width:111.00px;height:266.80px;background:#2a2a2a;background-image:linear-gradient(to right,rgba(255,255,255,.022) 0.6px,transparent 0.6px),linear-gradient(to bottom,rgba(255,255,255,.022) 0.6px,transparent 0.6px);background-size:15.25px 15.25px;"></div>
<div class="r" style="left:434.00px;top:81.60px;width:0.80px;height:266.80px;background:#151515;"></div>
<div class="r" style="left:545.00px;top:81.60px;width:294.60px;height:266.80px;background:#222;border-radius:0 0 5px 0;"></div>
<div class="r" style="left:425.20px;top:96.20px;width:8.80px;height:252.20px;background:#262626;"></div>
<div class="r" style="left:427.60px;top:98.00px;width:3.80px;height:224.60px;background:#5e5e5e;border-radius:2px;"></div>
<div class="r" style="left:314.80px;top:223.60px;width:105.40px;height:12.00px;background:#464646;border-radius:3px;"></div>
<div class="r" style="left:336.00px;top:104.80px;width:6.40px;height:6.40px;background:#fff;border-radius:.5px;"></div>
<div class="t" style="top:105px;font-size:6.8px;line-height:6.8px;color:#fff;left:349.50px;font-weight:700;letter-spacing:-0.007px;">Artboard Node</div>
<svg class="r" style="left:317.20px;top:120.80px;overflow:visible;" width="4.8" height="3.6" viewBox="0 0 4.8 3.6"><path d="M.6 .7l1.8 2 1.8-2" fill="none" stroke="#8c8c8c" stroke-width=".85"/></svg>
<div class="r" style="left:329.20px;top:118.80px;width:7.00px;height:7.00px;background:#6bbcf2;border-radius:50%;"></div>
<div class="t" style="top:119px;font-size:7.2px;line-height:7.2px;color:#505050;left:342.40px;font-weight:700;letter-spacing:-0.094px;">Element nodes</div>
<div class="r" style="left:336.20px;top:132.20px;width:7.00px;height:7.00px;background:#6bbcf2;border-radius:50%;"></div>
<div class="t" style="top:133px;font-size:6.8px;line-height:6.8px;color:#fff;left:350.70px;font-weight:700;letter-spacing:-0.100px;">Shape</div>
<div class="t" style="top:144px;font-size:9.4px;line-height:9.4px;color:#5b9fdc;left:336.40px;font-family:'Liberation Serif',serif;font-weight:700;">T</div>
<div class="t" style="top:146px;font-size:6.8px;line-height:6.8px;color:#fff;left:350.70px;font-weight:700;letter-spacing:0.043px;">Text</div>
<div class="r" style="left:336.00px;top:157.60px;width:7.40px;height:7.40px;background:#dfe7ee;border-radius:1px;"></div>
<svg class="r" style="left:336.00px;top:157.60px;overflow:visible;" width="7.4" height="7.4" viewBox="0 0 7.4 7.4"><path d="M5.4 2.4A2 2 0 1 0 5.6 4.6M3.7 3.7h2" fill="none" stroke="#3f7fbf" stroke-width=".9"/></svg>
<div class="t" style="top:159px;font-size:6.8px;line-height:6.8px;color:#fff;left:350.70px;font-weight:700;letter-spacing:0.071px;">Import</div>
<div class="t" style="top:171px;font-size:6.8px;line-height:6.8px;color:#fff;left:350.70px;font-weight:700;letter-spacing:-0.191px;">Line</div>
<svg class="r" style="left:335.60px;top:182.40px;overflow:visible;" width="8" height="8.4" viewBox="0 0 8 8.4"><circle cx="1.2" cy="4.2" r=".9" fill="#5b9fdc"/><circle cx="5.2" cy="1.4" r="1.2" fill="#5b9fdc"/><rect x="3.9" y="3.4" width="2.8" height="1.8" fill="#8fc3f0"/><rect x="3.7" y="5.8" width="3.2" height="2.4" fill="#6bbcf2"/></svg>
<div class="t" style="top:184px;font-size:6.8px;line-height:6.8px;color:#fff;left:350.70px;font-weight:700;letter-spacing:-0.060px;">Element list</div>
<svg class="r" style="left:318.00px;top:199.00px;overflow:visible;" width="3.6" height="4.8" viewBox="0 0 3.6 4.8"><path d="M.7 .6l2 1.8-2 1.8" fill="none" stroke="#8c8c8c" stroke-width=".85"/></svg>
<svg class="r" style="left:328.60px;top:197.60px;overflow:visible;" width="7.6" height="7.6" viewBox="0 0 7.6 7.6"><circle cx="3.8" cy="3.8" r="3.2" fill="none" stroke="#5f6f80" stroke-width=".9"/><circle cx="3.8" cy="3.8" r="1.5" fill="#8db7dc"/></svg>
<div class="t" style="top:198px;font-size:7.2px;line-height:7.2px;color:#505050;left:342.40px;font-weight:700;letter-spacing:-0.093px;">Change nodes</div>
<svg class="r" style="left:317.20px;top:214.20px;overflow:visible;" width="4.8" height="3.6" viewBox="0 0 4.8 3.6"><path d="M.6 .7l1.8 2 1.8-2" fill="none" stroke="#8c8c8c" stroke-width=".85"/></svg>
<svg class="r" style="left:328.80px;top:212.00px;overflow:visible;" width="7.6" height="7.6" viewBox="0 0 7.6 7.6"><rect x="0.4" y="0.4" width="1.4" height="1.4" fill="#cfcfcf"/><rect x="0.4" y="3.1" width="1.4" height="1.4" fill="#cfcfcf"/><rect x="0.4" y="5.8" width="1.4" height="1.4" fill="#cfcfcf"/><rect x="3.1" y="0.4" width="1.4" height="1.4" fill="#cfcfcf"/><rect x="3.1" y="3.1" width="1.4" height="1.4" fill="#cfcfcf"/><rect x="3.1" y="5.8" width="1.4" height="1.4" fill="#cfcfcf"/><rect x="5.8" y="0.4" width="1.4" height="1.4" fill="#cfcfcf"/><rect x="5.8" y="3.1" width="1.4" height="1.4" fill="#cfcfcf"/><rect x="5.8" y="5.8" width="1.4" height="1.4" fill="#cfcfcf"/></svg>
<div class="t" style="top:212px;font-size:7.2px;line-height:7.2px;color:#505050;left:342.40px;font-weight:700;letter-spacing:-0.012px;">Repeat nodes</div>
<svg class="r" style="left:335.40px;top:226.20px;overflow:visible;" width="9.6" height="8" viewBox="0 0 9.6 8"><circle cx="1.1" cy="4" r=".85" fill="#e8e8e8"/><rect x="3.3" y="1.9" width="1.7" height="4.3" rx=".3" fill="#e8e8e8"/><rect x="6.5" y=".2" width="2.2" height="7.6" rx=".3" fill="#e8e8e8"/></svg>
<div class="t" style="top:227px;font-size:6.8px;line-height:6.8px;color:#fff;left:350.70px;font-weight:700;letter-spacing:-0.094px;">Transform</div>
<svg class="r" style="left:336.00px;top:238.20px;overflow:visible;" width="7.6" height="7.6" viewBox="0 0 7.6 7.6"><rect x="0.4" y="0.4" width="1.3" height="1.3" fill="#e0e0e0"/><rect x="0.4" y="3.1" width="1.3" height="1.3" fill="#e0e0e0"/><rect x="0.4" y="5.8" width="1.3" height="1.3" fill="#e0e0e0"/><rect x="3.1" y="0.4" width="1.3" height="1.3" fill="#e0e0e0"/><rect x="3.1" y="3.1" width="1.3" height="1.3" fill="#e0e0e0"/><rect x="3.1" y="5.8" width="1.3" height="1.3" fill="#e0e0e0"/><rect x="5.8" y="0.4" width="1.3" height="1.3" fill="#e0e0e0"/><rect x="5.8" y="3.1" width="1.3" height="1.3" fill="#e0e0e0"/><rect x="5.8" y="5.8" width="1.3" height="1.3" fill="#e0e0e0"/></svg>
<div class="t" style="top:239px;font-size:6.8px;line-height:6.8px;color:#fff;left:350.70px;font-weight:700;letter-spacing:-0.258px;">Grid</div>
<svg class="r" style="left:335.80px;top:250.80px;overflow:visible;" width="8" height="8" viewBox="0 0 8 8"><circle cx="4" cy="4" r="2.7" fill="none" stroke="#e6e6e6" stroke-width="1.5" stroke-dasharray="1.1 1.02"/></svg>
<div class="t" style="top:252px;font-size:6.8px;line-height:6.8px;color:#fff;left:350.70px;font-weight:700;letter-spacing:-0.162px;">Radial</div>
<svg class="r" style="left:335.80px;top:263.60px;overflow:visible;" width="8" height="8" viewBox="0 0 8 8"><g fill="#d8d8d8"><rect x=".4" y=".6" width="1.2" height="3"/><rect x="2.6" y=".4" width="1.2" height="1.2"/><rect x="5.6" y="1" width="1.4" height="3.6"/><rect x="2.8" y="3" width="1.2" height="2.6"/><rect x="4.2" y="5.6" width="1.3" height="1.6"/></g></svg>
<div class="t" style="top:265px;font-size:6.8px;line-height:6.8px;color:#fff;left:350.70px;font-weight:700;letter-spacing:-0.139px;">Random</div>
<svg class="r" style="left:335.20px;top:276.60px;overflow:visible;" width="9" height="7" viewBox="0 0 9 7"><ellipse cx="3.2" cy="3.5" rx="2.9" ry="2.4" fill="#78b4ea"/><ellipse cx="5.8" cy="3.5" rx="2.9" ry="2.4" fill="#c9d6e2" fill-opacity=".9"/><rect x="4.2" y=".2" width=".7" height="6.6" fill="#e8eef5"/></svg>
<div class="t" style="top:277px;font-size:6.8px;line-height:6.8px;color:#fff;left:350.70px;font-weight:700;letter-spacing:-0.129px;">Mirror</div>
<div class="r" style="left:336.20px;top:289.60px;width:6.80px;height:6.80px;background:#5b9fdc;border-radius:.8px;"></div>
<svg class="r" style="left:336.20px;top:289.60px;overflow:visible;" width="6.8" height="6.8" viewBox="0 0 6.8 6.8"><path d="M.8 5.6L3 3l1.6 1.6L5.6 3.8V6H.8z" fill="#e8f0f8"/><rect x="1" y="1" width="2" height="1.6" fill="#e8f0f8"/></svg>
<div class="t" style="top:290px;font-size:6.8px;line-height:6.8px;color:#fff;left:350.70px;font-weight:700;letter-spacing:-0.001px;">Make seamless</div>
<svg class="r" style="left:318.00px;top:305.00px;overflow:visible;" width="3.6" height="4.8" viewBox="0 0 3.6 4.8"><path d="M.7 .6l2 1.8-2 1.8" fill="none" stroke="#8c8c8c" stroke-width=".85"/></svg>
<svg class="r" style="left:328.80px;top:303.60px;overflow:visible;" width="7.6" height="7.6" viewBox="0 0 7.6 7.6"><rect x="0.4" y="0.4" width="1.3" height="1.3" fill="#4f86c0"/><rect x="0.4" y="3.1" width="1.3" height="1.3" fill="#4f86c0"/><rect x="0.4" y="5.8" width="1.3" height="1.3" fill="#4f86c0"/><rect x="3.1" y="0.4" width="1.3" height="1.3" fill="#6a6a6a"/><rect x="3.1" y="3.1" width="1.3" height="1.3" fill="#6a6a6a"/><rect x="3.1" y="5.8" width="1.3" height="1.3" fill="#6a6a6a"/><rect x="5.8" y="0.4" width="1.3" height="1.3" fill="#6a6a6a"/><rect x="5.8" y="3.1" width="1.3" height="1.3" fill="#6a6a6a"/><rect x="5.8" y="5.8" width="1.3" height="1.3" fill="#6a6a6a"/></svg>
<div class="t" style="top:304px;font-size:7.2px;line-height:7.2px;color:#505050;left:342.40px;font-weight:700;letter-spacing:-0.123px;">Group nodes</div>
<svg class="r" style="left:318.00px;top:319.80px;overflow:visible;" width="3.6" height="4.8" viewBox="0 0 3.6 4.8"><path d="M.7 .6l2 1.8-2 1.8" fill="none" stroke="#8c8c8c" stroke-width=".85"/></svg>
<svg class="r" style="left:328.40px;top:318.20px;overflow:visible;" width="8.4" height="8" viewBox="0 0 8.4 8"><circle cx="4.2" cy="2.5" r="2.1" fill="#e89a5a"/><circle cx="2.4" cy="5.4" r="2.1" fill="#5aa0e8"/><circle cx="6" cy="5.4" r="2.1" fill="#a77be0"/><circle cx="4.2" cy="4.4" r="1" fill="#efe6f5"/></svg>
<div class="t" style="top:319px;font-size:7.2px;line-height:7.2px;color:#505050;left:342.40px;font-weight:700;letter-spacing:-0.094px;">Color nodes</div>
<svg class="r" style="left:318.00px;top:334.60px;overflow:visible;" width="3.6" height="4.8" viewBox="0 0 3.6 4.8"><path d="M.7 .6l2 1.8-2 1.8" fill="none" stroke="#8c8c8c" stroke-width=".85"/></svg>
<svg class="r" style="left:328.40px;top:333.00px;overflow:visible;" width="8.4" height="8" viewBox="0 0 8.4 8"><circle cx="4.2" cy="2.5" r="2.1" fill="#e89a5a"/><circle cx="2.4" cy="5.4" r="2.1" fill="#5aa0e8"/><circle cx="6" cy="5.4" r="2.1" fill="#a77be0"/><circle cx="4.2" cy="4.4" r="1" fill="#efe6f5"/></svg>
<div class="t" style="top:333px;font-size:7.2px;line-height:7.2px;color:#505050;left:342.40px;font-weight:700;letter-spacing:-0.001px;">Color operations</div>
<div class="r" style="left:433.90px;top:132.30px;width:21.00px;height:5.00px;background:#18222c;border-radius:3px;"></div>
<div class="r" style="left:434.80px;top:133.30px;width:19.20px;height:3.00px;background:#3b78b3;border-radius:2px;"></div>
<div class="r" style="left:452.00px;top:91.40px;width:73.60px;height:157.00px;background:#353535;border-radius:5px;border:0.8px solid #505050;"></div>
<div class="r" style="left:452.00px;top:108.40px;width:73.60px;height:53.10px;background:#fff;"></div>
<div class="r" style="left:475.00px;top:123.00px;width:7.60px;height:7.60px;background:#000;"></div>
<div class="r" style="left:496.60px;top:139.70px;width:7.60px;height:7.60px;background:#000;"></div>
<svg class="r" style="left:456.40px;top:95.90px;overflow:visible;" width="9.6" height="8" viewBox="0 0 9.6 8"><circle cx="1.1" cy="4" r=".85" fill="#fff"/><rect x="3.3" y="1.9" width="1.7" height="4.3" rx=".3" fill="#fff"/><rect x="6.5" y=".2" width="2.2" height="7.6" rx=".3" fill="#fff"/></svg>
<div class="t" style="top:95px;font-size:5.2px;line-height:5.2px;color:#8f8f8f;left:468.20px;letter-spacing:-0.428px;">Repeat</div>
<div class="t" style="top:99px;font-size:7.0px;line-height:7.0px;color:#fff;left:468.20px;font-weight:700;letter-spacing:-0.530px;">Transform</div>
<svg class="r" style="left:506.80px;top:94.70px;overflow:visible;" width="7.6" height="7.6" viewBox="0 0 7.6 7.6"><circle cx="3.8" cy="3.8" r="3.3" fill="none" stroke="#8e8e8e" stroke-width=".7"/><path d="M2.2 3.9l1.2 1.3 2.1-2.6" fill="none" stroke="#9a9a9a" stroke-width=".7"/></svg>
<svg class="r" style="left:516.20px;top:94.70px;overflow:visible;" width="7.6" height="7.6" viewBox="0 0 7.6 7.6"><circle cx="3.8" cy="3.8" r="3.3" fill="none" stroke="#8e8e8e" stroke-width=".7"/><path d="M2 3.8h3.6" fill="none" stroke="#9a9a9a" stroke-width=".9" stroke-dasharray="0.9 0.45"/></svg>
<div class="t" style="top:165px;font-size:6.8px;line-height:6.8px;color:#fff;left:457.40px;font-weight:700;letter-spacing:-0.508px;">Count</div>
<div class="r" style="left:502.00px;top:163.60px;width:17.00px;height:9.20px;background:#2f2f2f;border-radius:1.5px;border-bottom:0.6px solid #4a4a4a;"></div>
<div class="t" style="top:166px;font-size:6.6px;line-height:6.6px;color:#fff;left:503.60px;font-weight:700;">2</div>
<div class="t" style="top:177px;font-size:5.6px;line-height:5.6px;color:#8c8c8c;left:457.60px;font-weight:700;letter-spacing:-0.163px;">Transformation</div>
<div class="r" style="left:458.20px;top:184.40px;width:4.60px;height:4.60px;background:#2f7de0;border-radius:1px;"></div>
<svg class="r" style="left:458.20px;top:184.40px;overflow:visible;" width="4.6" height="4.6" viewBox="0 0 4.6 4.6"><path d="M1 2.4l1.1 1.2 1.7-2.4" fill="none" stroke="#fff" stroke-width=".9"/></svg>
<div class="t" style="top:185px;font-size:5.6px;line-height:5.6px;color:#8c8c8c;left:465.00px;font-weight:700;letter-spacing:0.046px;">Offset</div>
<svg class="r" style="left:515.10px;top:184.10px;overflow:visible;" width="5" height="5" viewBox="0 0 5 5"><path d="M2.5 0v5M0 2.5h5" stroke="#808080" stroke-width=".8"/></svg>
<div class="t" style="top:192px;font-size:6.8px;line-height:6.8px;color:#fff;left:457.40px;font-weight:700;">X</div>
<div class="r" style="left:502.00px;top:190.60px;width:17.00px;height:9.20px;background:#2f2f2f;border-radius:1.5px;border-bottom:0.6px solid #4a4a4a;"></div>
<div class="t" style="top:193px;font-size:6.6px;line-height:6.6px;color:#fff;left:503.60px;font-weight:700;">40</div>
<div class="r" style="left:496.60px;top:192.60px;width:1.60px;height:5.00px;background:#555;border-radius:.8px;"></div>
<div class="t" style="top:203px;font-size:6.8px;line-height:6.8px;color:#fff;left:457.40px;font-weight:700;">Y</div>
<div class="r" style="left:496.60px;top:202.80px;width:1.60px;height:5.00px;background:#555;border-radius:.8px;"></div>
<div class="r" style="left:457.80px;top:213.60px;width:5.80px;height:5.80px;background:#5c5c5c;border-radius:1.2px;"></div>
<div class="t" style="top:214px;font-size:6.8px;line-height:6.8px;color:#fff;left:466.00px;font-weight:700;letter-spacing:-0.406px;">Auto spacing</div>
<div class="r" style="left:458.20px;top:223.30px;width:4.80px;height:4.80px;background:#505050;border-radius:1.2px;"></div>
<div class="t" style="top:224px;font-size:5.6px;line-height:5.6px;color:#8c8c8c;left:465.00px;font-weight:700;letter-spacing:-0.158px;">Scale</div>
<div class="r" style="left:458.20px;top:231.30px;width:4.80px;height:4.80px;background:#505050;border-radius:1.2px;"></div>
<div class="t" style="top:232px;font-size:5.6px;line-height:5.6px;color:#8c8c8c;left:465.00px;font-weight:700;letter-spacing:-0.146px;">Resize</div>
<div class="r" style="left:515.40px;top:231.20px;width:4.40px;height:4.40px;background:#4a4a4a;border:0.6px solid #7a7a7a;border-radius:.8px;"></div>
<div class="r" style="left:458.20px;top:239.40px;width:4.80px;height:4.80px;background:#505050;border-radius:1.2px;"></div>
<div class="t" style="top:240px;font-size:5.6px;line-height:5.6px;color:#8c8c8c;left:465.00px;font-weight:700;letter-spacing:-0.098px;">Rotation</div>
<svg class="r" style="left:515.10px;top:239.10px;overflow:visible;" width="5" height="5" viewBox="0 0 5 5"><path d="M.6 4.2A3.4 3.4 0 0 1 4.4 1.2" fill="none" stroke="#808080" stroke-width=".8"/><path d="M2.2 4.4L4.6 2.6" stroke="#808080" stroke-width=".7"/></svg>
<div class="r" style="left:449.40px;top:165.20px;width:5.60px;height:5.60px;background:#1a1a1a;border-radius:50%;"></div>
<div class="r" style="left:449.40px;top:192.20px;width:5.60px;height:5.60px;background:#1a1a1a;border-radius:50%;"></div>
<div class="r" style="left:449.40px;top:202.40px;width:5.60px;height:5.60px;background:#1a1a1a;border-radius:50%;"></div>
<div class="r" style="left:449.40px;top:131.90px;width:5.80px;height:5.80px;background:#3b78b3;border-radius:50%;border:0.9px solid #18222c;"></div>
<div class="r" style="left:522.60px;top:165.00px;width:6.00px;height:6.00px;background:#3e3e3e;border-radius:50%;border:0.9px solid #181818;box-shadow:inset 0 0 0 .9px #646464;"></div>
<div class="r" style="left:522.60px;top:192.00px;width:6.00px;height:6.00px;background:#3e3e3e;border-radius:50%;border:0.9px solid #181818;box-shadow:inset 0 0 0 .9px #646464;"></div>
<div class="r" style="left:522.90px;top:131.90px;width:5.80px;height:5.80px;background:#3a6894;border-radius:50%;border:1px solid #18222c;"></div>
<div class="t" style="top:91px;font-size:9.0px;line-height:9.0px;color:#a2a2a2;left:552.60px;letter-spacing:-0.508px;">Repeat</div>
<div class="t" style="top:102px;font-size:14.4px;line-height:14.4px;color:#fff;left:552.60px;letter-spacing:0.308px;-webkit-text-stroke:.3px #fff;">Transform</div>
<div class="t" style="top:127px;font-size:6.9px;line-height:6.9px;color:#f2f2f2;left:552.60px;font-weight:700;font-style:italic;letter-spacing:-0.071px;">This node repeats the input Graphics element.</div>
<div class="t" style="top:142px;font-size:8.4px;line-height:8.4px;color:#a2a2a2;left:552.60px;letter-spacing:0.128px;">Node parameters</div>
<div class="t" style="top:156px;font-size:6.9px;line-height:6.9px;color:#fff;left:552.60px;font-weight:700;letter-spacing:0.201px;">Count:</div>
<div class="t" style="top:156px;font-size:6.9px;line-height:6.9px;color:#f0f0f0;left:578.60px;font-weight:700;letter-spacing:-0.070px;">Number of repetitions</div>
<div class="t" style="top:171px;font-size:8.4px;line-height:8.4px;color:#a2a2a2;left:552.60px;letter-spacing:0.153px;">Transformation</div>
<div class="t" style="top:185px;font-size:6.9px;line-height:6.9px;color:#fff;left:552.60px;font-weight:700;letter-spacing:0.538px;">Offset (X, Y):</div>
<div class="t" style="top:185px;font-size:6.9px;line-height:6.9px;color:#f0f0f0;left:604.00px;font-weight:700;letter-spacing:-0.045px;">Spacing between the repeated elements This parameter can be</div>
<div class="t" style="top:196px;font-size:6.9px;line-height:6.9px;color:#f0f0f0;left:552.60px;font-weight:700;letter-spacing:0.011px;">toggled on/off.</div>
<div class="t" style="top:206px;font-size:6.9px;line-height:6.9px;color:#9a9a9a;left:560.40px;letter-spacing:0.168px;">Offset can be edited in the preview.</div>
<div class="t" style="top:222px;font-size:6.9px;line-height:6.9px;color:#fff;left:552.60px;font-weight:700;letter-spacing:-0.204px;">Auto spacing (Checkbox)</div>
<div class="t" style="top:222px;font-size:6.9px;line-height:6.9px;color:#f0f0f0;left:634.60px;font-weight:700;letter-spacing:-0.062px;">: Sets the offset values automatically based on a repetition</div>
<div class="t" style="top:234px;font-size:6.9px;line-height:6.9px;color:#f0f0f0;left:552.60px;font-weight:700;letter-spacing:-0.046px;">area size and count.</div>
<div class="t" style="top:248px;font-size:6.9px;line-height:6.9px;color:#fff;left:552.60px;font-weight:700;letter-spacing:0.390px;">Scale (X, Y):</div>
<div class="t" style="top:248px;font-size:6.9px;line-height:6.9px;color:#f0f0f0;left:599.80px;font-weight:700;letter-spacing:-0.036px;">Scale of the element This parameter can be toggled on/off.</div>
<div class="t" style="top:259px;font-size:6.9px;line-height:6.9px;color:#9a9a9a;left:560.40px;letter-spacing:0.162px;">Scale can be edited in the preview.</div>
<div class="t" style="top:276px;font-size:6.9px;line-height:6.9px;color:#fff;left:552.60px;font-weight:700;letter-spacing:0.357px;">Resize (X Add, Y Add):</div>
<div class="t" style="top:276px;font-size:6.9px;line-height:6.9px;color:#f0f0f0;left:636.20px;font-weight:700;letter-spacing:-0.053px;">Size change in absolute units, used in Size mode instead</div>
<div class="t" style="top:286px;font-size:6.9px;line-height:6.9px;color:#f0f0f0;left:552.60px;font-weight:700;letter-spacing:-0.063px;">of scale This parameter can be toggled on/off.</div>
<div class="t" style="top:297px;font-size:6.9px;line-height:6.9px;color:#9a9a9a;left:560.40px;letter-spacing:0.162px;">Scale can be edited in the preview.</div>
<div class="t" style="top:313px;font-size:6.9px;line-height:6.9px;color:#fff;left:552.60px;font-weight:700;letter-spacing:0.345px;">Rotation:</div>
<div class="t" style="top:313px;font-size:6.9px;line-height:6.9px;color:#f0f0f0;left:588.20px;font-weight:700;letter-spacing:-0.055px;">Angle in degrees the element will be rotated per repetition. This</div>
<div class="t" style="top:323px;font-size:6.9px;line-height:6.9px;color:#f0f0f0;left:552.60px;font-weight:700;letter-spacing:-0.040px;">parameter can be toggled on/off.</div>
<div class="t" style="top:333px;font-size:6.9px;line-height:6.9px;color:#9a9a9a;left:560.40px;letter-spacing:0.164px;">Rotation can be edited in the preview.</div>
<div class="r" style="left:832.60px;top:81.60px;width:7.00px;height:266.80px;background:#272727;border-radius:0 0 5px 0;"></div>
<div class="r" style="left:835.00px;top:84.40px;width:3.40px;height:153.00px;background:#6a6a6a;border-radius:2px;"></div>
<div class="r" style="left:311.00px;top:67.00px;width:528.60px;height:281.40px;background:transparent;border-radius:5px;box-shadow:inset 0 0 0 .7px rgba(255,255,255,.15);"></div>
<div class="r" style="left:522.00px;top:197.60px;width:93.00px;height:18.40px;background:#323232;border-radius:4px;box-shadow:0 1px 4px rgba(0,0,0,.45);"></div>
<div class="r" style="left:501.60px;top:199.40px;width:20.80px;height:11.40px;background:#1d3a5c;border:1.3px solid #3f7cc0;border-radius:1.5px;"></div>
<div class="r" style="left:504.40px;top:201.60px;width:9.40px;height:7.20px;background:#2f64b5;"></div>
<div class="t" style="top:203px;font-size:6.8px;line-height:6.8px;color:#fff;left:505.00px;font-weight:700;">31</div>
<div class="r" style="left:525.00px;top:199.80px;width:7.20px;height:10.80px;background:#555;border-radius:2.4px;"></div>
<svg class="r" style="left:526.40px;top:200.60px;overflow:visible;" width="4.4" height="9.2" viewBox="0 0 4.4 9.2"><path d="M.8 3.6L2.2 2 3.6 3.6M.8 5.6L2.2 7.2 3.6 5.6" fill="none" stroke="#e8e8e8" stroke-width=".8"/></svg>
<div class="r" style="left:535.00px;top:207.20px;width:75.40px;height:1.60px;background:#4a4a4a;border-radius:1px;"></div>
<div class="r" style="left:535.00px;top:207.20px;width:25.00px;height:1.60px;background:#2f7de0;border-radius:1px;"></div>
<div class="r" style="left:556.00px;top:204.00px;width:8.00px;height:8.00px;background:#9c9c9c;border-radius:50%;"></div>
<div class="t" style="top:201px;font-size:4.6px;line-height:4.6px;color:#7a7a7a;left:535.40px;">0</div>
<div class="t" style="top:201px;font-size:4.6px;line-height:4.6px;color:#7a7a7a;left:603.00px;">100</div>
<div class="r" style="left:515.80px;top:219.20px;width:117.40px;height:9.20px;background:#3b3b3b;border-radius:1.5px;"></div>
<div class="t" style="top:221px;font-size:6.2px;line-height:6.2px;color:#f4f4f4;left:518.80px;font-weight:700;letter-spacing:-0.166px;">Spacing between the repeated elements</div>
</div></body></html>
